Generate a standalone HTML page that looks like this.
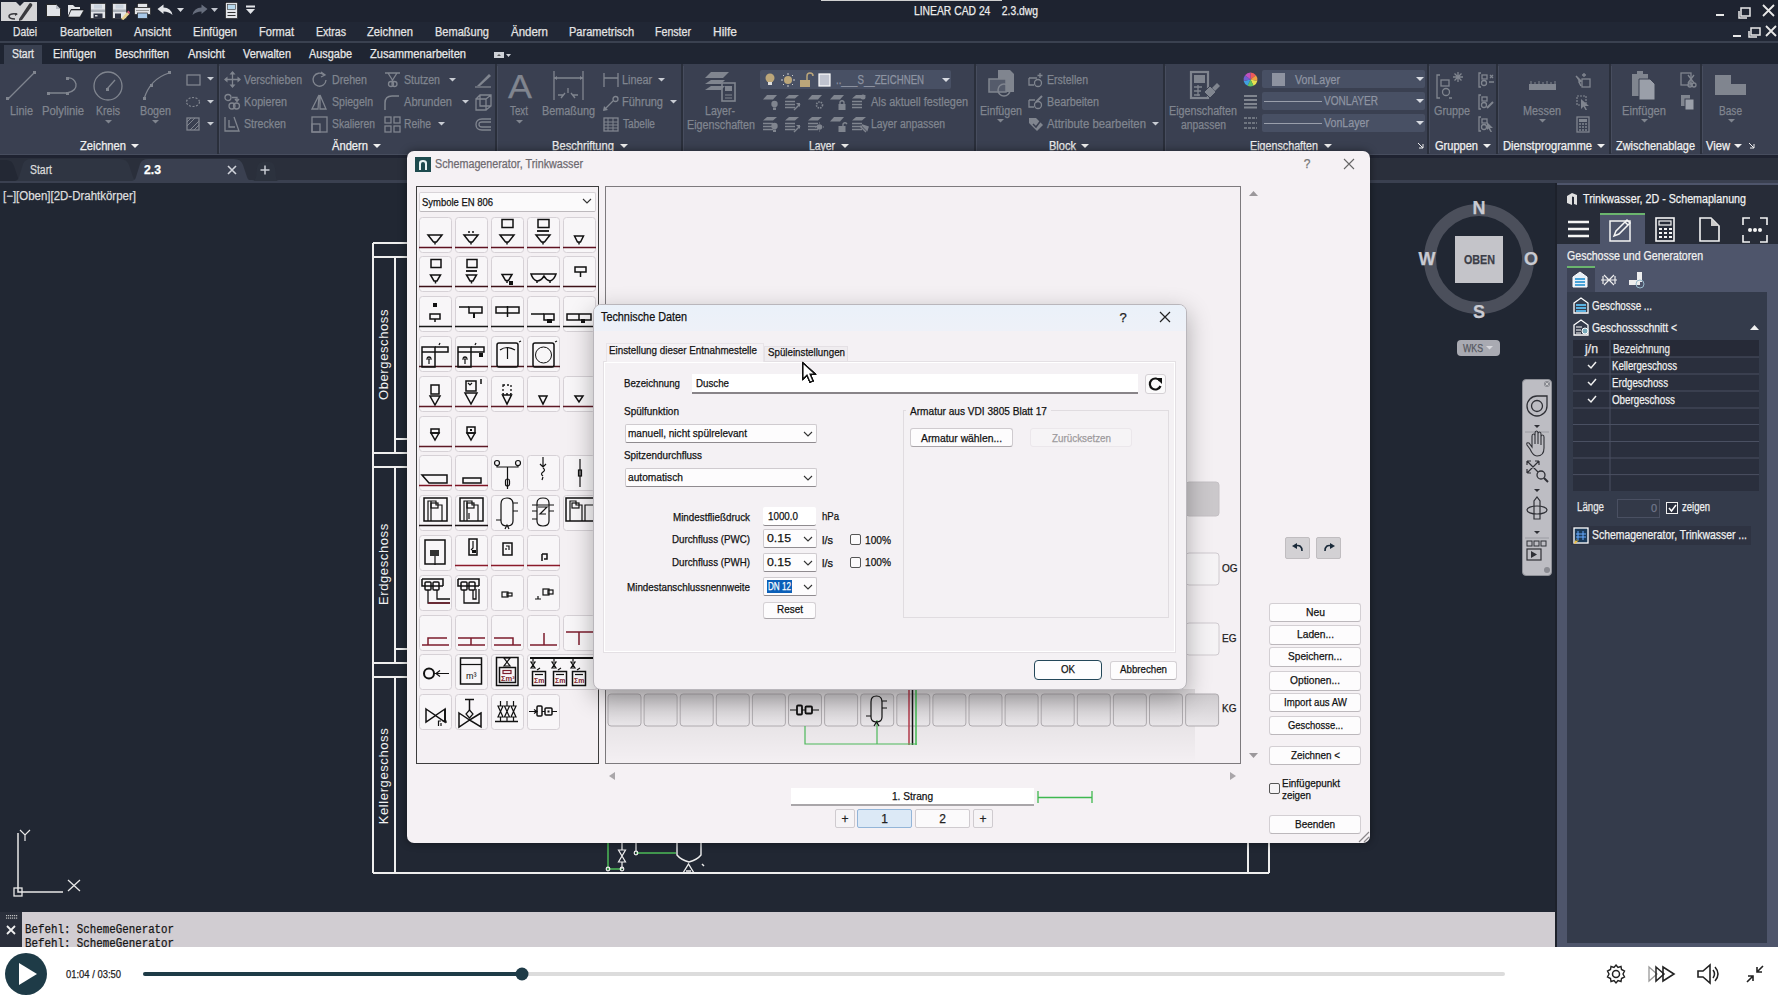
<!DOCTYPE html>
<html><head><meta charset="utf-8">
<style>
*{box-sizing:border-box;margin:0;padding:0}
html,body{width:1778px;height:1000px;overflow:hidden;background:#212733;font-family:"Liberation Sans",sans-serif;position:relative}
.a{position:absolute}
svg.a{overflow:visible}
.t{position:absolute;white-space:nowrap;line-height:1;-webkit-text-stroke:0.25px currentColor}
</style></head><body>
<div class="a" style="left:0px;top:0px;width:1778px;height:22px;background:#1e2330;"></div>
<div class="a" style="left:0px;top:22px;width:1778px;height:19px;background:#212735;"></div>
<div class="a" style="left:0px;top:41px;width:1778px;height:2px;background:#3a4150;"></div>
<div class="a" style="left:0px;top:43px;width:1778px;height:21px;background:#1f2532;"></div>
<div class="a" style="left:0px;top:64px;width:1778px;height:92px;background:#3a4051;"></div>
<div class="a" style="left:0px;top:156px;width:1778px;height:27px;background:#2a2f3b;"></div>
<div class="a" style="left:0px;top:183px;width:1555px;height:729px;background:#212733;"></div>
<div class="a" style="left:0px;top:912px;width:1555px;height:36px;background:#d1cdd2;"></div>
<div class="a" style="left:0px;top:948px;width:1778px;height:52px;background:#ffffff;"></div>
<div class="a" style="left:1555px;top:183px;width:223px;height:765px;background:#4b5169;"></div>
<svg class="a" style="left:1px;top:1px;" width="37" height="21" viewBox="0 0 37 21"><path d="M0 1 H15 L19 5 L23 1 H36 V20 H0 Z" fill="#d4d4d6"/><path d="M18 18 L28 3 Q29 1.5 30.5 2.5 Q32 3.5 31 5 L21 19 L18 20 Z" fill="#3a3a3e"/><path d="M16 13 Q9 12 8 15 Q8 18 14 18" stroke="#3a3a3e" stroke-width="1.6" fill="none"/><path d="M14 12 L17 13 L14 15" fill="#3a3a3e"/></svg>
<svg class="a" style="left:46px;top:4px;" width="16" height="14" viewBox="0 0 16 14"><path d="M0.5 0.5 H10 L14.5 5 V12.5 H0.5 Z" fill="#e2e4e8" stroke="#111" stroke-width="0.8"/><path d="M10 0.5 V5 H14.5" fill="#b8bcc4"/></svg>
<svg class="a" style="left:67px;top:4px;" width="18" height="14" viewBox="0 0 18 14"><path d="M1 1 H6 L8 3 H13 V5 H4 L1 12 Z" fill="#e2e4e8"/><path d="M4 6 H17 L13 13 H1 Z" fill="#e2e4e8" stroke="#111" stroke-width="0.6"/></svg>
<svg class="a" style="left:90px;top:3px;" width="17" height="16" viewBox="0 0 17 16"><path d="M0.5 0.5 H15.5 V15.5 H0.5 Z" fill="#e2e4e8" stroke="#111" stroke-width="0.6"/><rect x="4" y="1.5" width="8" height="4" fill="#c9d2dc"/><rect x="1" y="6.5" width="14" height="2.5" fill="#aab0b8"/><rect x="3.5" y="10.5" width="9" height="5" fill="#2c3140"/><rect x="5" y="12" width="2.5" height="1.5" fill="#ddd"/></svg>
<svg class="a" style="left:112px;top:3px;" width="18" height="17" viewBox="0 0 18 17"><path d="M0.5 0.5 H14.5 V15.5 H0.5 Z" fill="#e2e4e8" stroke="#111" stroke-width="0.6"/><rect x="3.5" y="1.5" width="8" height="4" fill="#c9d2dc"/><rect x="1" y="6.5" width="13" height="2.5" fill="#aab0b8"/><rect x="3" y="10.5" width="6" height="5" fill="#2c3140"/><path d="M9 16 L15 9 L17.5 11 L11.5 17 Z" fill="#e8d090"/><path d="M15 9 L16.5 7.5 L18 9.5 L17.5 11 Z" fill="#d05070"/></svg>
<svg class="a" style="left:134px;top:3px;" width="17" height="16" viewBox="0 0 17 16"><rect x="3.5" y="0.5" width="10" height="4" fill="#e2e4e8" stroke="#111" stroke-width="0.6"/><rect x="0.5" y="4.5" width="16" height="7" fill="#e2e4e8" stroke="#111" stroke-width="0.6"/><rect x="3.5" y="10" width="10" height="5.5" fill="#a8c8e8" stroke="#111" stroke-width="0.6"/><rect x="2" y="7" width="13" height="1" fill="#999"/></svg>
<svg class="a" style="left:157px;top:4px;" width="18" height="13" viewBox="0 0 18 13"><path d="M0.5 5 L6.5 0.5 V3.5 Q14 3.5 15.5 11 Q12 7.5 6.5 7.5 V10 Z" fill="#e2e4e8"/></svg>
<svg class="a" style="left:177px;top:8px;" width="8" height="5" viewBox="0 0 8 5"><path d="M0 0 H7 L3.5 4 Z" fill="#d8dbe0"/></svg>
<svg class="a" style="left:190px;top:4px;" width="18" height="13" viewBox="0 0 18 13"><path d="M17.5 5 L11.5 0.5 V3.5 Q4 3.5 2.5 11 Q6 7.5 11.5 7.5 V10 Z" fill="#666d7c"/></svg>
<svg class="a" style="left:211px;top:8px;" width="8" height="5" viewBox="0 0 8 5"><path d="M0 0 H7 L3.5 4 Z" fill="#c0c4cc"/></svg>
<svg class="a" style="left:225px;top:2px;" width="14" height="17" viewBox="0 0 14 17"><rect x="0.5" y="0.5" width="12" height="16" fill="#e2e4e8" stroke="#111" stroke-width="0.6"/><rect x="2.5" y="2.5" width="8" height="5" fill="#b8d8ec" stroke="#333" stroke-width="0.6"/><path d="M2.5 10.5 H10.5 M2.5 13.5 H10.5" stroke="#333" stroke-width="1"/></svg>
<svg class="a" style="left:245px;top:5px;" width="11" height="10" viewBox="0 0 11 10"><rect x="1" y="0.5" width="9" height="2" fill="#e2e4e8"/><path d="M1 4 H10 L5.5 9 Z" fill="#e2e4e8"/></svg>
<div class="t" style="left:914.0px;top:5.0px;font-size:12px;color:#ececec;transform:scaleX(0.861);transform-origin:0 0;">LINEAR CAD 24&nbsp;&nbsp;&nbsp; 2.3.dwg</div>
<div class="a" style="left:821px;top:0px;width:181px;height:1px;background:#d0d0d0;"></div>
<svg class="a" style="left:1714px;top:4px;" width="64" height="16" viewBox="0 0 64 16"><rect x="2" y="10" width="8" height="2" fill="#e8e8e8"/><rect x="27" y="4" width="9" height="8" fill="none" stroke="#e8e8e8" stroke-width="1.5"/><path d="M25 7 V14 H33" fill="none" stroke="#e8e8e8" stroke-width="1.5"/><path d="M49 1 L60 12 M60 1 L49 12" stroke="#e8e8e8" stroke-width="1.8"/></svg>
<svg class="a" style="left:1730px;top:25px;" width="48" height="16" viewBox="0 0 48 16"><rect x="3" y="10" width="8" height="2" fill="#e8e8e8"/><rect x="21" y="3" width="9" height="7" fill="none" stroke="#e8e8e8" stroke-width="1.5"/><path d="M19 6 V12 H27" fill="none" stroke="#e8e8e8" stroke-width="1.5"/><path d="M36 1 L46 11 M46 1 L36 11" stroke="#e8e8e8" stroke-width="1.8"/></svg>
<div class="t" style="left:13.0px;top:26.0px;font-size:12px;color:#e4e4e4;transform:scaleX(0.857);transform-origin:0 0;">Datei</div>
<div class="t" style="left:60.0px;top:26.0px;font-size:12px;color:#e4e4e4;transform:scaleX(0.896);transform-origin:0 0;">Bearbeiten</div>
<div class="t" style="left:134.0px;top:26.0px;font-size:12px;color:#e4e4e4;transform:scaleX(0.940);transform-origin:0 0;">Ansicht</div>
<div class="t" style="left:193.0px;top:26.0px;font-size:12px;color:#e4e4e4;transform:scaleX(0.929);transform-origin:0 0;">Einfügen</div>
<div class="t" style="left:259.0px;top:26.0px;font-size:12px;color:#e4e4e4;transform:scaleX(0.921);transform-origin:0 0;">Format</div>
<div class="t" style="left:316.0px;top:26.0px;font-size:12px;color:#e4e4e4;transform:scaleX(0.882);transform-origin:0 0;">Extras</div>
<div class="t" style="left:367.0px;top:26.0px;font-size:12px;color:#e4e4e4;transform:scaleX(0.932);transform-origin:0 0;">Zeichnen</div>
<div class="t" style="left:435.0px;top:26.0px;font-size:12px;color:#e4e4e4;transform:scaleX(0.920);transform-origin:0 0;">Bemaßung</div>
<div class="t" style="left:511.0px;top:26.0px;font-size:12px;color:#e4e4e4;transform:scaleX(0.956);transform-origin:0 0;">Ändern</div>
<div class="t" style="left:569.0px;top:26.0px;font-size:12px;color:#e4e4e4;transform:scaleX(0.920);transform-origin:0 0;">Parametrisch</div>
<div class="t" style="left:655.0px;top:26.0px;font-size:12px;color:#e4e4e4;transform:scaleX(0.885);transform-origin:0 0;">Fenster</div>
<div class="t" style="left:713.0px;top:26.0px;font-size:12px;color:#e4e4e4;transform:scaleX(1.000);transform-origin:0 0;">Hilfe</div>
<div class="a" style="left:4px;top:45px;width:38px;height:19px;background:#394050;"></div>
<div class="t" style="left:12.0px;top:48.0px;font-size:12px;color:#e8e8e8;transform:scaleX(0.868);transform-origin:0 0;">Start</div>
<div class="t" style="left:53.0px;top:48.0px;font-size:12px;color:#e8e8e8;transform:scaleX(0.908);transform-origin:0 0;">Einfügen</div>
<div class="t" style="left:115.0px;top:48.0px;font-size:12px;color:#e8e8e8;transform:scaleX(0.900);transform-origin:0 0;">Beschriften</div>
<div class="t" style="left:188.0px;top:48.0px;font-size:12px;color:#e8e8e8;transform:scaleX(0.940);transform-origin:0 0;">Ansicht</div>
<div class="t" style="left:243.0px;top:48.0px;font-size:12px;color:#e8e8e8;transform:scaleX(0.911);transform-origin:0 0;">Verwalten</div>
<div class="t" style="left:309.0px;top:48.0px;font-size:12px;color:#e8e8e8;transform:scaleX(0.908);transform-origin:0 0;">Ausgabe</div>
<div class="t" style="left:370.0px;top:48.0px;font-size:12px;color:#e8e8e8;transform:scaleX(0.929);transform-origin:0 0;">Zusammenarbeiten</div>
<svg class="a" style="left:493px;top:51px;" width="18" height="8" viewBox="0 0 18 8"><rect x="1" y="1" width="10" height="6" fill="#cfd2d8"/><path d="M4 5 L6 3 L8 5" fill="#555"/><path d="M13 3 H18 L15.5 6 Z" fill="#cfd2d8"/></svg>
<div class="a" style="left:217px;top:64px;width:2px;height:91px;background:#2a2f3b;"></div>
<div class="a" style="left:219px;top:66px;width:1px;height:87px;background:#474d5e;"></div>
<div class="a" style="left:495px;top:64px;width:2px;height:91px;background:#2a2f3b;"></div>
<div class="a" style="left:497px;top:66px;width:1px;height:87px;background:#474d5e;"></div>
<div class="a" style="left:681px;top:64px;width:2px;height:91px;background:#2a2f3b;"></div>
<div class="a" style="left:683px;top:66px;width:1px;height:87px;background:#474d5e;"></div>
<div class="a" style="left:974px;top:64px;width:2px;height:91px;background:#2a2f3b;"></div>
<div class="a" style="left:976px;top:66px;width:1px;height:87px;background:#474d5e;"></div>
<div class="a" style="left:1163px;top:64px;width:2px;height:91px;background:#2a2f3b;"></div>
<div class="a" style="left:1165px;top:66px;width:1px;height:87px;background:#474d5e;"></div>
<div class="a" style="left:1427px;top:64px;width:2px;height:91px;background:#2a2f3b;"></div>
<div class="a" style="left:1429px;top:66px;width:1px;height:87px;background:#474d5e;"></div>
<div class="a" style="left:1496px;top:64px;width:2px;height:91px;background:#2a2f3b;"></div>
<div class="a" style="left:1498px;top:66px;width:1px;height:87px;background:#474d5e;"></div>
<div class="a" style="left:1609px;top:64px;width:2px;height:91px;background:#2a2f3b;"></div>
<div class="a" style="left:1611px;top:66px;width:1px;height:87px;background:#474d5e;"></div>
<div class="a" style="left:1700px;top:64px;width:2px;height:91px;background:#2a2f3b;"></div>
<div class="a" style="left:1702px;top:66px;width:1px;height:87px;background:#474d5e;"></div>
<div class="a" style="left:0px;top:154px;width:1778px;height:1px;background:#474d5e;"></div>
<div class="a" style="left:0px;top:155px;width:1778px;height:3px;background:#1f2331;"></div>
<div class="t" style="left:80.0px;top:140.0px;font-size:12px;color:#f0f0f0;transform:scaleX(0.932);transform-origin:0 0;">Zeichnen</div>
<svg class="a" style="left:131px;top:144.0px;" width="8" height="4" viewBox="0 0 8 4"><path d="M0 0 H8 L4 4 Z" fill="#f0f0f0"/></svg>
<div class="t" style="left:332.0px;top:140.0px;font-size:12px;color:#f0f0f0;transform:scaleX(0.930);transform-origin:0 0;">Ändern</div>
<svg class="a" style="left:373px;top:144.0px;" width="8" height="4" viewBox="0 0 8 4"><path d="M0 0 H8 L4 4 Z" fill="#f0f0f0"/></svg>
<div class="t" style="left:552.0px;top:140.0px;font-size:12px;color:#f0f0f0;transform:scaleX(0.929);transform-origin:0 0;">Beschriftung</div>
<svg class="a" style="left:620px;top:144.0px;" width="8" height="4" viewBox="0 0 8 4"><path d="M0 0 H8 L4 4 Z" fill="#f0f0f0"/></svg>
<div class="t" style="left:809.0px;top:140.0px;font-size:12px;color:#f0f0f0;transform:scaleX(0.866);transform-origin:0 0;">Layer</div>
<svg class="a" style="left:841px;top:144.0px;" width="8" height="4" viewBox="0 0 8 4"><path d="M0 0 H8 L4 4 Z" fill="#f0f0f0"/></svg>
<div class="t" style="left:1049.0px;top:140.0px;font-size:12px;color:#f0f0f0;transform:scaleX(0.920);transform-origin:0 0;">Block</div>
<svg class="a" style="left:1081px;top:144.0px;" width="8" height="4" viewBox="0 0 8 4"><path d="M0 0 H8 L4 4 Z" fill="#f0f0f0"/></svg>
<div class="t" style="left:1250.0px;top:140.0px;font-size:12px;color:#f0f0f0;transform:scaleX(0.894);transform-origin:0 0;">Eigenschaften</div>
<svg class="a" style="left:1324px;top:144.0px;" width="8" height="4" viewBox="0 0 8 4"><path d="M0 0 H8 L4 4 Z" fill="#f0f0f0"/></svg>
<div class="t" style="left:1435.0px;top:140.0px;font-size:12px;color:#f0f0f0;transform:scaleX(0.921);transform-origin:0 0;">Gruppen</div>
<svg class="a" style="left:1483px;top:144.0px;" width="8" height="4" viewBox="0 0 8 4"><path d="M0 0 H8 L4 4 Z" fill="#f0f0f0"/></svg>
<div class="t" style="left:1503.0px;top:140.0px;font-size:12px;color:#f0f0f0;transform:scaleX(0.933);transform-origin:0 0;">Dienstprogramme</div>
<svg class="a" style="left:1597px;top:144.0px;" width="8" height="4" viewBox="0 0 8 4"><path d="M0 0 H8 L4 4 Z" fill="#f0f0f0"/></svg>
<div class="t" style="left:1616.0px;top:140.0px;font-size:12px;color:#f0f0f0;transform:scaleX(0.911);transform-origin:0 0;">Zwischenablage</div>
<div class="t" style="left:1706.0px;top:140.0px;font-size:12px;color:#f0f0f0;transform:scaleX(0.930);transform-origin:0 0;">View</div>
<svg class="a" style="left:1734px;top:144.0px;" width="8" height="4" viewBox="0 0 8 4"><path d="M0 0 H8 L4 4 Z" fill="#f0f0f0"/></svg>
<svg class="a" style="left:1417px;top:142px;" width="8" height="8" viewBox="0 0 8 8"><path d="M1 1 L6 6 M6 2 V6 H2" stroke="#f0f0f0" stroke-width="1" fill="none"/></svg>
<svg class="a" style="left:1748px;top:142px;" width="8" height="8" viewBox="0 0 8 8"><path d="M1 1 L6 6 M6 2 V6 H2" stroke="#f0f0f0" stroke-width="1" fill="none"/></svg>
<svg class="a" style="left:0px;top:64px;" width="220" height="60" viewBox="0 0 220 60">
      <path d="M8 35 L34 9" stroke="#80858f" stroke-width="1.3" fill="none"/><rect x="6" y="33" width="3" height="3" fill="#80858f"/><rect x="33" y="7" width="3" height="3" fill="#80858f"/>
      <path d="M49 29 H67 Q77 27 76 20 Q74 13 67 14" stroke="#80858f" stroke-width="1.3" fill="none"/><rect x="47" y="28" width="3" height="3" fill="#80858f"/><rect x="66" y="28" width="3" height="3" fill="#80858f"/><rect x="66" y="13" width="3" height="3" fill="#80858f"/>
      <circle cx="108" cy="22" r="14" stroke="#80858f" stroke-width="1.3" fill="none"/><path d="M107 25 L115 16" stroke="#80858f" stroke-width="1.3" fill="none"/><rect x="106" y="24" width="3" height="3" fill="#80858f"/>
      <path d="M144 35 Q150 15 169 9" stroke="#80858f" stroke-width="1.3" fill="none"/><rect x="143" y="33" width="3" height="3" fill="#80858f"/><rect x="150" y="20" width="3" height="3" fill="#80858f"/><rect x="168" y="7" width="3" height="3" fill="#80858f"/>
      <rect x="187" y="11" width="13" height="10" stroke="#80858f" stroke-width="1.3" fill="none"/>
      <ellipse cx="193" cy="38" rx="6.5" ry="4.5" stroke="#80858f" stroke-width="1.2" fill="none" stroke-dasharray="2 1.5"/>
    </svg>
<svg class="a" style="left:186px;top:117px;" width="15" height="15" viewBox="0 0 15 15"><rect x="1" y="1" width="12" height="12" stroke="#80858f" stroke-width="1.3" fill="none"/><path d="M1 9 L9 1 M4 13 L13 4 M1 5 L5 1 M8 13 L13 8" stroke="#80858f" stroke-width="1"/></svg>
<svg class="a" style="left:206.5px;top:77.25px;" width="7.0" height="3.5" viewBox="0 0 7.0 3.5"><path d="M0 0 H7.0 L3.5 3.5 Z" fill="#c8ccd3"/></svg>
<svg class="a" style="left:206.5px;top:100.25px;" width="7.0" height="3.5" viewBox="0 0 7.0 3.5"><path d="M0 0 H7.0 L3.5 3.5 Z" fill="#c8ccd3"/></svg>
<svg class="a" style="left:206.5px;top:122.25px;" width="7.0" height="3.5" viewBox="0 0 7.0 3.5"><path d="M0 0 H7.0 L3.5 3.5 Z" fill="#c8ccd3"/></svg>
<div class="t" style="left:10.0px;top:105.0px;font-size:12px;color:#80858f;transform:scaleX(0.907);transform-origin:0 0;">Linie</div>
<div class="t" style="left:42.0px;top:105.0px;font-size:12px;color:#80858f;transform:scaleX(0.940);transform-origin:0 0;">Polylinie</div>
<div class="t" style="left:96.0px;top:105.0px;font-size:12px;color:#80858f;transform:scaleX(0.878);transform-origin:0 0;">Kreis</div>
<div class="t" style="left:140.0px;top:105.0px;font-size:12px;color:#80858f;transform:scaleX(0.893);transform-origin:0 0;">Bogen</div>
<svg class="a" style="left:104.5px;top:120.25px;" width="7.0" height="3.5" viewBox="0 0 7.0 3.5"><path d="M0 0 H7.0 L3.5 3.5 Z" fill="#80858f"/></svg>
<svg class="a" style="left:151.5px;top:120.25px;" width="7.0" height="3.5" viewBox="0 0 7.0 3.5"><path d="M0 0 H7.0 L3.5 3.5 Z" fill="#80858f"/></svg>
<svg class="a" style="left:224px;top:71px;" width="17" height="17" viewBox="0 0 17 17"><path d="M8.5 1 V16 M1 8.5 H16" stroke="#80858f" stroke-width="1.3" fill="none"/><path d="M8.5 0 L5.5 3.5 H11.5 Z M8.5 17 L5.5 13.5 H11.5 Z M0 8.5 L3.5 5.5 V11.5 Z M17 8.5 L13.5 5.5 V11.5 Z" fill="#80858f"/></svg>
<svg class="a" style="left:224px;top:94px;" width="17" height="16" viewBox="0 0 17 16"><circle cx="4" cy="3.5" r="3" stroke="#80858f" stroke-width="1.3" fill="none"/><path d="M8 3.5 H13 V7 M11 5 L13 7.5 L15 5" stroke="#80858f" stroke-width="1.3" fill="none"/><circle cx="8" cy="12" r="3" stroke="#80858f" stroke-width="1.3" fill="none"/><circle cx="12.5" cy="12" r="3" stroke="#80858f" stroke-width="1.3" fill="none"/></svg>
<svg class="a" style="left:224px;top:116px;" width="17" height="17" viewBox="0 0 17 17"><path d="M1 1 V15 H15 L10 1 M5 4 V11 H11" stroke="#80858f" stroke-width="1.3" fill="none"/></svg>
<svg class="a" style="left:311px;top:71px;" width="17" height="17" viewBox="0 0 17 17"><path d="M13 4 A6.5 6.5 0 1 0 15 9" stroke="#80858f" stroke-width="1.3" fill="none"/><path d="M10 1 L14 4 L10 6" stroke="#80858f" stroke-width="1.3" fill="none"/></svg>
<svg class="a" style="left:311px;top:94px;" width="17" height="16" viewBox="0 0 17 16"><path d="M8 1 L1 15 H7 Z M9 1 L15 15 H9 Z" stroke="#80858f" stroke-width="1.3" fill="none"/></svg>
<svg class="a" style="left:311px;top:116px;" width="17" height="17" viewBox="0 0 17 17"><rect x="1" y="1" width="15" height="15" stroke="#80858f" stroke-width="1.3" fill="none"/><rect x="1" y="8" width="8" height="8" stroke="#80858f" stroke-width="1.3" fill="none"/></svg>
<svg class="a" style="left:384px;top:71px;" width="17" height="17" viewBox="0 0 17 17"><path d="M1 2 H16 M4 2 L9 10 M13 2 L8 10" stroke="#80858f" stroke-width="1.3" fill="none"/><circle cx="7" cy="13" r="2.5" stroke="#80858f" stroke-width="1.3" fill="none"/><circle cx="10.5" cy="13" r="2.5" stroke="#80858f" stroke-width="1.3" fill="none"/></svg>
<svg class="a" style="left:384px;top:94px;" width="17" height="17" viewBox="0 0 17 17"><path d="M1 16 V9 Q1 2 8 2 H15" stroke="#80858f" stroke-width="1.5" fill="none"/></svg>
<svg class="a" style="left:384px;top:116px;" width="17" height="17" viewBox="0 0 17 17"><rect x="1" y="1" width="6" height="6" stroke="#80858f" stroke-width="1.3" fill="none"/><rect x="10" y="1" width="6" height="6" stroke="#80858f" stroke-width="1.3" fill="none"/><rect x="1" y="10" width="6" height="6" stroke="#80858f" stroke-width="1.3" fill="none"/><rect x="10" y="10" width="6" height="6" stroke="#80858f" stroke-width="1.3" fill="none"/></svg>
<svg class="a" style="left:475px;top:71px;" width="17" height="17" viewBox="0 0 17 17"><path d="M2 15 L14 3 L16 5 L5 15 Z" fill="#80858f"/><path d="M0 16 H16" stroke="#80858f" stroke-width="1.3" fill="none"/></svg>
<svg class="a" style="left:475px;top:94px;" width="17" height="17" viewBox="0 0 17 17"><path d="M1 5 H11 V16 H1 Z M1 5 L5 1 H16 V12 L11 16 M11 5 L16 1 M5 1 V12 H16" stroke="#80858f" stroke-width="1.3" fill="none"/></svg>
<svg class="a" style="left:475px;top:116px;" width="17" height="17" viewBox="0 0 17 17"><path d="M16 3 H7 Q1 3 1 8.5 Q1 14 7 14 H16 M16 6 H7 Q4 6 4 8.5 Q4 11 7 11 H16" stroke="#80858f" stroke-width="1.3" fill="none"/></svg>
<div class="t" style="left:244.0px;top:74.0px;font-size:12px;color:#80858f;transform:scaleX(0.878);transform-origin:0 0;">Verschieben</div>
<div class="t" style="left:244.0px;top:96.0px;font-size:12px;color:#80858f;transform:scaleX(0.895);transform-origin:0 0;">Kopieren</div>
<div class="t" style="left:244.0px;top:118.0px;font-size:12px;color:#80858f;transform:scaleX(0.887);transform-origin:0 0;">Strecken</div>
<div class="t" style="left:332.0px;top:74.0px;font-size:12px;color:#80858f;transform:scaleX(0.889);transform-origin:0 0;">Drehen</div>
<div class="t" style="left:332.0px;top:96.0px;font-size:12px;color:#80858f;transform:scaleX(0.878);transform-origin:0 0;">Spiegeln</div>
<div class="t" style="left:332.0px;top:118.0px;font-size:12px;color:#80858f;transform:scaleX(0.859);transform-origin:0 0;">Skalieren</div>
<div class="t" style="left:404.0px;top:74.0px;font-size:12px;color:#80858f;transform:scaleX(0.885);transform-origin:0 0;">Stutzen</div>
<svg class="a" style="left:448.5px;top:78.25px;" width="7.0" height="3.5" viewBox="0 0 7.0 3.5"><path d="M0 0 H7.0 L3.5 3.5 Z" fill="#c8ccd3"/></svg>
<div class="t" style="left:404.0px;top:96.0px;font-size:12px;color:#80858f;transform:scaleX(0.922);transform-origin:0 0;">Abrunden</div>
<svg class="a" style="left:461.5px;top:100.25px;" width="7.0" height="3.5" viewBox="0 0 7.0 3.5"><path d="M0 0 H7.0 L3.5 3.5 Z" fill="#c8ccd3"/></svg>
<div class="t" style="left:404.0px;top:118.0px;font-size:12px;color:#80858f;transform:scaleX(0.861);transform-origin:0 0;">Reihe</div>
<svg class="a" style="left:437.5px;top:122.25px;" width="7.0" height="3.5" viewBox="0 0 7.0 3.5"><path d="M0 0 H7.0 L3.5 3.5 Z" fill="#c8ccd3"/></svg>
<div class="t" style="left:508.0px;top:69.0px;font-size:34px;color:#80858f;transform:scaleX(1.058);transform-origin:0 0;">A</div>
<div class="t" style="left:510.0px;top:105.0px;font-size:12px;color:#80858f;transform:scaleX(0.818);transform-origin:0 0;">Text</div>
<svg class="a" style="left:515.5px;top:120.25px;" width="7.0" height="3.5" viewBox="0 0 7.0 3.5"><path d="M0 0 H7.0 L3.5 3.5 Z" fill="#80858f"/></svg>
<svg class="a" style="left:553px;top:71px;" width="31" height="31" viewBox="0 0 31 31"><path d="M1 0 V29 M30 0 V29 M1 7 H30" stroke="#80858f" stroke-width="1.3" fill="none"/><path d="M1 7 L4 5 V9 Z M30 7 L27 5 V9 Z" fill="#80858f"/><path d="M8 27 L12 22 M15 22 V17 M22 27 L18 22 M5 24 L10 24 M25 24 L20 24" stroke="#80858f" stroke-width="1.3" fill="none"/></svg>
<div class="t" style="left:542.0px;top:105.0px;font-size:12px;color:#80858f;transform:scaleX(0.903);transform-origin:0 0;">Bemaßung</div>
<svg class="a" style="left:603px;top:72px;" width="16" height="16" viewBox="0 0 16 16"><path d="M1 1 V15 M15 1 V15 M1 6 H15" stroke="#80858f" stroke-width="1.3" fill="none"/></svg>
<div class="t" style="left:622.0px;top:74.0px;font-size:12px;color:#80858f;transform:scaleX(0.899);transform-origin:0 0;">Linear</div>
<svg class="a" style="left:657.5px;top:78.25px;" width="7.0" height="3.5" viewBox="0 0 7.0 3.5"><path d="M0 0 H7.0 L3.5 3.5 Z" fill="#c8ccd3"/></svg>
<svg class="a" style="left:603px;top:95px;" width="16" height="16" viewBox="0 0 16 16"><path d="M1 15 L10 6" stroke="#80858f" stroke-width="1.3" fill="none"/><circle cx="12.5" cy="4" r="2.5" stroke="#80858f" stroke-width="1.3" fill="none"/><path d="M0 16 L1 11 L5 15 Z" fill="#80858f"/></svg>
<div class="t" style="left:622.0px;top:96.0px;font-size:12px;color:#80858f;transform:scaleX(0.917);transform-origin:0 0;">Führung</div>
<svg class="a" style="left:669.5px;top:100.25px;" width="7.0" height="3.5" viewBox="0 0 7.0 3.5"><path d="M0 0 H7.0 L3.5 3.5 Z" fill="#c8ccd3"/></svg>
<svg class="a" style="left:603px;top:117px;" width="16" height="15" viewBox="0 0 16 15"><rect x="1" y="1" width="14" height="13" stroke="#80858f" stroke-width="1.3" fill="none"/><path d="M1 5 H15 M1 8 H15 M1 11 H15 M5 1 V14 M10 1 V14" stroke="#80858f" stroke-width="1"/></svg>
<div class="t" style="left:623.0px;top:118.0px;font-size:12px;color:#80858f;transform:scaleX(0.841);transform-origin:0 0;">Tabelle</div>
<svg class="a" style="left:705px;top:70px;" width="32" height="32" viewBox="0 0 32 32"><path d="M6 2 H24 L18 8 H0 Z" fill="#80858f"/><path d="M6 10 H20 L16 14 H0 Z M6 16 H20 L16 20 H0 Z" fill="#80858f"/><rect x="17" y="13" width="13" height="18" fill="none" stroke="#80858f" stroke-width="1.6"/><rect x="20" y="16" width="7" height="5" fill="#80858f"/><path d="M20 25 H27 M20 28 H27" stroke="#80858f"/></svg>
<div class="t" style="left:705.0px;top:105.0px;font-size:12px;color:#80858f;transform:scaleX(0.882);transform-origin:0 0;">Layer-</div>
<div class="t" style="left:687.0px;top:119.0px;font-size:12px;color:#80858f;transform:scaleX(0.894);transform-origin:0 0;">Eigenschaften</div>
<div class="a" style="left:760px;top:70px;width:191px;height:19px;background:#485064;border-radius:2px"></div>
<svg class="a" style="left:764px;top:72px;" width="70" height="16" viewBox="0 0 70 16"><circle cx="6" cy="6" r="4.5" fill="#bba67a"/><rect x="4" y="10" width="4" height="3" fill="#ddd"/><circle cx="24" cy="8" r="4" fill="#bba67a"/><path d="M24 1 V3 M24 13 V15 M17 8 H19 M29 8 H31 M19 3 L20 4 M29 3 L28 4 M19 13 L20 12 M29 13 L28 12" stroke="#ccc" stroke-width="1"/><rect x="36" y="8" width="10" height="7" fill="#bba67a"/><path d="M43 8 V4 Q43 1 46 1 Q49 1 49 4" stroke="#bba67a" stroke-width="1.5" fill="none"/><rect x="55" y="2" width="11" height="12" fill="#c0c4d0" stroke="#fff" stroke-width="1.2"/></svg>
<div class="t" style="left:836.0px;top:74.0px;font-size:12px;color:#8e94a2;transform:scaleX(0.805);transform-origin:0 0;">..___S__ZEICHNEN</div>
<svg class="a" style="left:942px;top:78.0px;" width="8" height="4" viewBox="0 0 8 4"><path d="M0 0 H8 L4 4 Z" fill="#d8dbe2"/></svg>
<svg class="a" style="left:763px;top:94px;" width="17" height="17" viewBox="0 0 17 17"><path d="M4 1 H14 L10 5.5 H0 Z" fill="#80858f"/><circle cx="11.5" cy="10" r="3.2" fill="#80858f"/><rect x="10" y="13.5" width="3" height="2.5" fill="#80858f"/></svg>
<svg class="a" style="left:763px;top:116px;" width="17" height="17" viewBox="0 0 17 17"><path d="M4 1 H14 L10 4.5 H0 Z M0 7 H10 M0 10 H10 M0 13 H10" fill="#80858f" stroke="#80858f" stroke-width="0"/><path d="M0 7.5 H10 M0 10.5 H10 M0 13.5 H10" stroke="#80858f" stroke-width="1.6"/><circle cx="11.5" cy="10" r="3.2" fill="#80858f"/><rect x="10" y="13.5" width="3" height="2.5" fill="#80858f"/></svg>
<svg class="a" style="left:785px;top:94px;" width="17" height="17" viewBox="0 0 17 17"><path d="M4 1 H14 L10 4.5 H0 Z M0 7 H10 M0 10 H10 M0 13 H10" fill="#80858f" stroke="#80858f" stroke-width="0"/><path d="M0 7.5 H10 M0 10.5 H10 M0 13.5 H10" stroke="#80858f" stroke-width="1.6"/><path d="M9 16 L15 10" stroke="#80858f" stroke-width="1.5"/><path d="M15 9 L15 13 L11 9 Z" fill="#80858f"/></svg>
<svg class="a" style="left:785px;top:116px;" width="17" height="17" viewBox="0 0 17 17"><path d="M4 1 H14 L10 4.5 H0 Z M0 7 H10 M0 10 H10 M0 13 H10" fill="#80858f" stroke="#80858f" stroke-width="0"/><path d="M0 7.5 H10 M0 10.5 H10 M0 13.5 H10" stroke="#80858f" stroke-width="1.6"/><path d="M9 16 L15 10" stroke="#80858f" stroke-width="1.5"/><path d="M15 9 L15 13 L11 9 Z" fill="#80858f"/></svg>
<svg class="a" style="left:808px;top:94px;" width="17" height="17" viewBox="0 0 17 17"><path d="M4 1 H14 L10 5.5 H0 Z" fill="#80858f"/><circle cx="11.5" cy="11" r="3" fill="none" stroke="#80858f" stroke-width="1.6" stroke-dasharray="1.5 1"/></svg>
<svg class="a" style="left:808px;top:116px;" width="17" height="17" viewBox="0 0 17 17"><path d="M4 1 H14 L10 4.5 H0 Z M0 7 H10 M0 10 H10 M0 13 H10" fill="#80858f" stroke="#80858f" stroke-width="0"/><path d="M0 7.5 H10 M0 10.5 H10 M0 13.5 H10" stroke="#80858f" stroke-width="1.6"/><circle cx="11.5" cy="11" r="2.8" fill="#80858f"/><path d="M11.5 6.5 V7.5 M11.5 14.5 V15.5 M7 11 H8 M15 11 H16" stroke="#80858f"/></svg>
<svg class="a" style="left:830px;top:94px;" width="17" height="17" viewBox="0 0 17 17"><path d="M4 1 H14 L10 5.5 H0 Z" fill="#80858f"/><rect x="8.5" y="10" width="7" height="6" fill="#80858f"/><path d="M10 10 V8 Q12 5.5 14 8 V10" stroke="#80858f" stroke-width="1.3" fill="none"/></svg>
<svg class="a" style="left:830px;top:116px;" width="17" height="17" viewBox="0 0 17 17"><path d="M4 1 H14 L10 5.5 H0 Z" fill="#80858f"/><rect x="8.5" y="10" width="7" height="6" fill="#80858f"/><path d="M13 10 V8 Q15 5.5 17 8" stroke="#80858f" stroke-width="1.3" fill="none"/></svg>
<svg class="a" style="left:852px;top:94px;" width="17" height="17" viewBox="0 0 17 17"><circle cx="11" cy="3" r="2.5" fill="#80858f"/><path d="M4 1 H14 L10 4.5 H0 Z M0 7 H10 M0 10 H10 M0 13 H10" fill="#80858f" stroke="#80858f" stroke-width="0"/><path d="M0 7.5 H10 M0 10.5 H10 M0 13.5 H10" stroke="#80858f" stroke-width="1.6"/></svg>
<svg class="a" style="left:852px;top:116px;" width="17" height="17" viewBox="0 0 17 17"><path d="M4 1 H14 L10 4.5 H0 Z M0 7 H10 M0 10 H10 M0 13 H10" fill="#80858f" stroke="#80858f" stroke-width="0"/><path d="M0 7.5 H10 M0 10.5 H10 M0 13.5 H10" stroke="#80858f" stroke-width="1.6"/><path d="M8 10 L14 16 M10 9 L15 14 L16 11 Z" stroke="#80858f" stroke-width="1.5" fill="#80858f"/></svg>
<div class="t" style="left:871.0px;top:96.0px;font-size:12px;color:#80858f;transform:scaleX(0.909);transform-origin:0 0;">Als aktuell festlegen</div>
<div class="t" style="left:871.0px;top:118.0px;font-size:12px;color:#80858f;transform:scaleX(0.867);transform-origin:0 0;">Layer anpassen</div>
<svg class="a" style="left:988px;top:70px;" width="30" height="30" viewBox="0 0 30 30"><path d="M10 0 H22 L26 4 V22 H10 Z" fill="#80858f"/><rect x="1" y="9" width="17" height="13" fill="#555b6b" stroke="#80858f" stroke-width="1.5"/><circle cx="16" cy="20" r="6" fill="none" stroke="#80858f" stroke-width="1.5"/></svg>
<div class="t" style="left:980.0px;top:105.0px;font-size:12px;color:#80858f;transform:scaleX(0.887);transform-origin:0 0;">Einfügen</div>
<svg class="a" style="left:996.5px;top:119.25px;" width="7.0" height="3.5" viewBox="0 0 7.0 3.5"><path d="M0 0 H7.0 L3.5 3.5 Z" fill="#80858f"/></svg>
<svg class="a" style="left:1028px;top:72px;" width="16" height="16" viewBox="0 0 16 16"><path d="M1 6 H9 M1 6 V13 H6" stroke="#80858f" stroke-width="1.3" fill="none"/><circle cx="10" cy="11" r="3.5" stroke="#80858f" stroke-width="1.3" fill="none"/><path d="M12 1 L12 6 M9.5 3.5 H14.5" stroke="#80858f" stroke-width="1.3" fill="none"/></svg>
<svg class="a" style="left:1028px;top:94px;" width="16" height="16" viewBox="0 0 16 16"><path d="M1 6 H7 M1 6 V13 H6" stroke="#80858f" stroke-width="1.3" fill="none"/><circle cx="10" cy="11" r="3.5" stroke="#80858f" stroke-width="1.3" fill="none"/><path d="M8 8 L14 2" stroke="#80858f" stroke-width="2"/></svg>
<svg class="a" style="left:1028px;top:116px;" width="16" height="16" viewBox="0 0 16 16"><path d="M1 2 L8 2 L15 9 L9 15 L1 7 Z" fill="#80858f"/><path d="M5 8 L8 11 L14 3" stroke="#3a4051" stroke-width="1.5" fill="none"/></svg>
<div class="t" style="left:1047.0px;top:74.0px;font-size:12px;color:#80858f;transform:scaleX(0.878);transform-origin:0 0;">Erstellen</div>
<div class="t" style="left:1047.0px;top:96.0px;font-size:12px;color:#80858f;transform:scaleX(0.896);transform-origin:0 0;">Bearbeiten</div>
<div class="t" style="left:1047.0px;top:118.0px;font-size:12px;color:#80858f;transform:scaleX(0.945);transform-origin:0 0;">Attribute bearbeiten</div>
<svg class="a" style="left:1151.5px;top:122.25px;" width="7.0" height="3.5" viewBox="0 0 7.0 3.5"><path d="M0 0 H7.0 L3.5 3.5 Z" fill="#c8ccd3"/></svg>
<svg class="a" style="left:1189px;top:71px;" width="32" height="30" viewBox="0 0 32 30"><rect x="2" y="1" width="17" height="26" fill="none" stroke="#80858f" stroke-width="2.2"/><rect x="5" y="4" width="11" height="8" fill="#80858f"/><path d="M5 16 H13 M5 20 H12 M5 24 H11 M9 14 V25" stroke="#80858f" stroke-width="1.3"/><path d="M15 21 L21 15 L27 21 L21 27 Z" fill="#80858f" stroke="#3a4051" stroke-width="1"/><path d="M23 17 L28 12 L31 15 L26 20 Z" fill="#80858f"/></svg>
<div class="t" style="left:1169.0px;top:105.0px;font-size:12px;color:#80858f;transform:scaleX(0.894);transform-origin:0 0;">Eigenschaften</div>
<div class="t" style="left:1180.5px;top:119.0px;font-size:12px;color:#80858f;transform:scaleX(0.865);transform-origin:0 0;">anpassen</div>
<svg class="a" style="left:1243px;top:72px;" width="15" height="15" viewBox="0 0 15 15"><path d="M7.5 7.5 L7.50 0.50 A7 7 0 0 1 12.97 3.14 Z" fill="#f05a5a"/><path d="M7.5 7.5 L12.97 3.14 A7 7 0 0 1 14.32 9.06 Z" fill="#f0a040"/><path d="M7.5 7.5 L14.32 9.06 A7 7 0 0 1 10.54 13.81 Z" fill="#e8e050"/><path d="M7.5 7.5 L10.54 13.81 A7 7 0 0 1 4.46 13.81 Z" fill="#60c060"/><path d="M7.5 7.5 L4.46 13.81 A7 7 0 0 1 0.68 9.06 Z" fill="#40a0e0"/><path d="M7.5 7.5 L0.68 9.06 A7 7 0 0 1 2.03 3.14 Z" fill="#7060d0"/><path d="M7.5 7.5 L2.03 3.14 A7 7 0 0 1 7.50 0.50 Z" fill="#c050c0"/></svg>
<svg class="a" style="left:1243px;top:94px;" width="15" height="15" viewBox="0 0 15 15"><path d="M1 2 H14 M1 6 H14 M1 10 H14 M1 13.5 H14" stroke="#80858f" stroke-width="2"/></svg>
<svg class="a" style="left:1243px;top:116px;" width="15" height="15" viewBox="0 0 15 15"><path d="M1 2 H14 M1 7 H14 M1 12 H14" stroke="#80858f" stroke-width="1.5" stroke-dasharray="3 1"/></svg>
<div class="a" style="left:1262px;top:70px;width:163px;height:18px;background:#485064;border-radius:2px"></div>
<svg class="a" style="left:1416px;top:77.0px;" width="8" height="4" viewBox="0 0 8 4"><path d="M0 0 H8 L4 4 Z" fill="#d8dbe2"/></svg>
<div class="a" style="left:1262px;top:92px;width:163px;height:18px;background:#485064;border-radius:2px"></div>
<svg class="a" style="left:1416px;top:99.0px;" width="8" height="4" viewBox="0 0 8 4"><path d="M0 0 H8 L4 4 Z" fill="#d8dbe2"/></svg>
<div class="a" style="left:1262px;top:114px;width:163px;height:18px;background:#485064;border-radius:2px"></div>
<svg class="a" style="left:1416px;top:121.0px;" width="8" height="4" viewBox="0 0 8 4"><path d="M0 0 H8 L4 4 Z" fill="#d8dbe2"/></svg>
<div class="a" style="left:1272px;top:73px;width:13px;height:13px;background:#8e93a0;"></div>
<div class="t" style="left:1295.0px;top:74.0px;font-size:12px;color:#8e94a2;transform:scaleX(0.887);transform-origin:0 0;">VonLayer</div>
<div class="a" style="left:1264px;top:101px;width:58px;height:1px;background:#9a9fab;"></div>
<div class="t" style="left:1324.0px;top:95.0px;font-size:12px;color:#8e94a2;transform:scaleX(0.838);transform-origin:0 0;">VONLAYER</div>
<div class="a" style="left:1264px;top:123px;width:58px;height:1px;background:#9a9fab;"></div>
<div class="t" style="left:1324.0px;top:117.0px;font-size:12px;color:#8e94a2;transform:scaleX(0.887);transform-origin:0 0;">VonLayer</div>
<svg class="a" style="left:1436px;top:71px;" width="30" height="30" viewBox="0 0 30 30"><path d="M4 4 H1 V27 H4 M13 27 H16" stroke="#80858f" stroke-width="1.3" fill="none"/><rect x="5" y="9" width="8" height="6" stroke="#80858f" stroke-width="1.3" fill="none"/><circle cx="10" cy="21" r="3.5" stroke="#80858f" stroke-width="1.3" fill="none"/><path d="M22 1 V11 M17 6 H27 M18.5 2.5 L25.5 9.5 M25.5 2.5 L18.5 9.5" stroke="#80858f" stroke-width="1.3"/></svg>
<div class="t" style="left:1434.0px;top:105.0px;font-size:12px;color:#80858f;transform:scaleX(0.899);transform-origin:0 0;">Gruppe</div>
<svg class="a" style="left:1478px;top:72px;" width="16" height="16" viewBox="0 0 16 16"><path d="M3 1 H1 V15 H3" stroke="#80858f" stroke-width="1.3" fill="none"/><rect x="4" y="3" width="5" height="4" stroke="#80858f" stroke-width="1.3" fill="none"/><circle cx="6" cy="11" r="2.5" stroke="#80858f" stroke-width="1.3" fill="none"/><path d="M12 3 L15 6 M15 3 L12 6 M11 10 H16" stroke="#80858f" stroke-width="1.3" fill="none"/></svg>
<svg class="a" style="left:1478px;top:94px;" width="16" height="16" viewBox="0 0 16 16"><path d="M3 1 H1 V15 H3" stroke="#80858f" stroke-width="1.3" fill="none"/><rect x="4" y="3" width="5" height="4" stroke="#80858f" stroke-width="1.3" fill="none"/><circle cx="6" cy="11" r="2.5" stroke="#80858f" stroke-width="1.3" fill="none"/><path d="M9 14 L15 8" stroke="#80858f" stroke-width="2"/></svg>
<svg class="a" style="left:1478px;top:116px;" width="16" height="16" viewBox="0 0 16 16"><path d="M3 1 H1 V15 H3" stroke="#80858f" stroke-width="1.3" fill="none"/><rect x="4" y="3" width="5" height="4" stroke="#80858f" stroke-width="1.3" fill="none"/><circle cx="6" cy="11" r="2.5" stroke="#80858f" stroke-width="1.3" fill="none"/><path d="M9 6 L15 12 L12 12 L14 16 L12.5 16 L10.5 12.5 L9 14 Z" fill="#80858f"/></svg>
<svg class="a" style="left:1528px;top:80px;" width="29" height="12" viewBox="0 0 29 12"><rect x="1" y="4" width="27" height="6" fill="#80858f"/><path d="M3 4 V1 M7 4 V2 M11 4 V1 M15 4 V2 M19 4 V1 M23 4 V2 M27 4 V1" stroke="#80858f"/></svg>
<div class="t" style="left:1523.0px;top:105.0px;font-size:12px;color:#80858f;transform:scaleX(0.904);transform-origin:0 0;">Messen</div>
<svg class="a" style="left:1538.5px;top:119.25px;" width="7.0" height="3.5" viewBox="0 0 7.0 3.5"><path d="M0 0 H7.0 L3.5 3.5 Z" fill="#80858f"/></svg>
<svg class="a" style="left:1575px;top:72px;" width="16" height="16" viewBox="0 0 16 16"><path d="M1 4 L6 9 L4 10 L6 14" stroke="#80858f" stroke-width="1.5" fill="#80858f"/><rect x="7" y="7" width="8" height="8" stroke="#80858f" stroke-width="1.3" fill="none"/><path d="M9 1 V5 M7 3 H11" stroke="#80858f" stroke-width="1.3" fill="none"/></svg>
<svg class="a" style="left:1575px;top:94px;" width="16" height="16" viewBox="0 0 16 16"><rect x="2" y="2" width="9" height="9" stroke="#80858f" stroke-width="1.2" fill="none" stroke-dasharray="2 1"/><path d="M6 5 L14 12 L10 12 L12 16 L10.5 16 L8.5 12.5 L6 15 Z" fill="#80858f"/></svg>
<svg class="a" style="left:1575px;top:116px;" width="16" height="16" viewBox="0 0 16 16"><rect x="2" y="1" width="12" height="15" stroke="#80858f" stroke-width="1.3" fill="none"/><rect x="4" y="3" width="8" height="3" fill="#80858f"/><path d="M4 8 H6 M7 8 H9 M10 8 H12 M4 11 H6 M7 11 H9 M10 11 H12 M4 14 H6 M7 14 H9 M10 14 H12" stroke="#80858f" stroke-width="1.5"/></svg>
<svg class="a" style="left:1630px;top:70px;" width="28" height="31" viewBox="0 0 28 31"><rect x="2" y="4" width="16" height="22" fill="#80858f"/><rect x="7" y="1" width="6" height="5" fill="#80858f"/><path d="M9 9 H20 L25 14 V30 H9 Z" fill="#9a9fa9" stroke="#3a4051" stroke-width="1"/></svg>
<div class="t" style="left:1622.0px;top:105.0px;font-size:12px;color:#80858f;transform:scaleX(0.929);transform-origin:0 0;">Einfügen</div>
<svg class="a" style="left:1640.5px;top:119.25px;" width="7.0" height="3.5" viewBox="0 0 7.0 3.5"><path d="M0 0 H7.0 L3.5 3.5 Z" fill="#80858f"/></svg>
<svg class="a" style="left:1680px;top:72px;" width="16" height="16" viewBox="0 0 16 16"><rect x="1" y="1" width="10" height="12" stroke="#80858f" stroke-width="1.3" fill="none"/><circle cx="10" cy="13" r="2" stroke="#80858f" stroke-width="1.3" fill="none"/><circle cx="14" cy="13" r="2" stroke="#80858f" stroke-width="1.3" fill="none"/><path d="M8 3 L14 11 M14 3 L8 11" stroke="#80858f" stroke-width="1.3" fill="none"/></svg>
<svg class="a" style="left:1680px;top:94px;" width="16" height="16" viewBox="0 0 16 16"><rect x="1" y="1" width="9" height="11" fill="#80858f"/><rect x="5" y="5" width="9" height="11" fill="#9a9fa9" stroke="#3a4051"/></svg>
<svg class="a" style="left:1714px;top:74px;" width="33" height="22" viewBox="0 0 33 22"><path d="M1 1 H17 V10 H32 V21 H1 Z" fill="#80858f"/></svg>
<div class="t" style="left:1719.0px;top:105.0px;font-size:12px;color:#80858f;transform:scaleX(0.841);transform-origin:0 0;">Base</div>
<svg class="a" style="left:1727.5px;top:119.25px;" width="7.0" height="3.5" viewBox="0 0 7.0 3.5"><path d="M0 0 H7.0 L3.5 3.5 Z" fill="#80858f"/></svg>
<div class="a" style="left:0px;top:180px;width:1778px;height:3px;background:#3a4050;"></div>
<svg class="a" style="left:0px;top:156px;" width="290" height="27" viewBox="0 0 290 27">
      <path d="M0 4 H6 Q12 4 14 10 L18 22 Q19 25 22 25 H0 Z" fill="#232834"/>
      <path d="M14 25 Q18 25 19 21 L23 8 Q25 3 31 3 H120 Q127 3 129 9 L133 21 Q134 25 139 25 Z" fill="#2f3542"/>
      <path d="M131 25 Q135 25 136 21 L140 8 Q142 3 148 3 H234 Q241 3 243 9 L247 21 Q248 25 253 25 Z" fill="#3a4050"/>
      <path d="M252 25 Q255 25 256 21 L257 12 Q258 6 263 6 H270 Q274 6 275 12 L276 21 Q276 25 279 25 Z" fill="#2c323e"/>
    </svg>
<div class="t" style="left:30.0px;top:164.0px;font-size:12px;color:#dcdcdc;transform:scaleX(0.868);transform-origin:0 0;">Start</div>
<div class="t" style="left:144.0px;top:163.8px;font-size:12.5px;color:#ffffff;font-weight:bold;transform:scaleX(0.978);transform-origin:0 0;">2.3</div>
<svg class="a" style="left:227px;top:165px;" width="10" height="10" viewBox="0 0 10 10"><path d="M1 1 L9 9 M9 1 L1 9" stroke="#d0d3da" stroke-width="1.6"/></svg>
<svg class="a" style="left:260px;top:165px;" width="10" height="10" viewBox="0 0 10 10"><path d="M5 0.5 V9.5 M0.5 5 H9.5" stroke="#c8ccd3" stroke-width="1.5"/></svg>
<div class="t" style="left:3.0px;top:190.0px;font-size:12px;color:#dedede;transform:scaleX(0.956);transform-origin:0 0;">[−][Oben][2D-Drahtkörper]</div>
<svg class="a" style="left:0px;top:0px;" width="1555" height="912" viewBox="0 0 1555 912"><path d="M373 243 V873 M373 873 H1269" stroke="#eeeeee" stroke-width="2"/><path d="M373 243 H408" stroke="#eeeeee" stroke-width="2"/><path d="M373 257 H408" stroke="#eeeeee" stroke-width="2"/><path d="M373 453 H408" stroke="#eeeeee" stroke-width="2"/><path d="M373 467 H408" stroke="#eeeeee" stroke-width="2"/><path d="M373 663 H408" stroke="#eeeeee" stroke-width="2"/><path d="M373 677 H408" stroke="#eeeeee" stroke-width="2"/><path d="M395 439 H408 M395 649 H408" stroke="#eeeeee" stroke-width="2"/><path d="M395 257 V453" stroke="#eeeeee" stroke-width="2"/><path d="M395 467 V663" stroke="#eeeeee" stroke-width="2"/><path d="M395 677 V873" stroke="#eeeeee" stroke-width="2"/><path d="M1248 843 V873 M1269 843 V873" stroke="#eeeeee" stroke-width="2"/><path d="M608 843 V869 H622" stroke="#4cbc58" stroke-width="1.5" fill="none"/><path d="M636 853 H676" stroke="#4cbc58" stroke-width="1.5" fill="none"/><path d="M622 843 V850 M622 862 V869 M618.5 850 H625.5 L618.5 862 H625.5 Z M636 843 V851" stroke="#eeeeee" stroke-width="1.2" fill="none"/><circle cx="608" cy="869" r="1.8" fill="none" stroke="#eeeeee" stroke-width="1.2"/><circle cx="622" cy="869" r="1.8" fill="none" stroke="#eeeeee" stroke-width="1.2"/><circle cx="636" cy="853" r="1.8" fill="none" stroke="#eeeeee" stroke-width="1.2"/><path d="M677 843 V855 Q681 860 689 862 Q697 860 701 855 V843 M683 873 L688.5 864 L694 873 M686 871 H691" stroke="#eeeeee" stroke-width="1.4" fill="none"/><path d="M702 864 L704 866" stroke="#eeeeee" stroke-width="1.5"/></svg>
<div class="t" style="left:339.0px;top:348px;width:90px;height:14px;font-size:13px;color:#f2f2f2;text-align:center;transform:rotate(-90deg);letter-spacing:0.6px;-webkit-text-stroke:0">Obergeschoss</div>
<div class="t" style="left:344.0px;top:558px;width:80px;height:14px;font-size:13px;color:#f2f2f2;text-align:center;transform:rotate(-90deg);letter-spacing:0.6px;-webkit-text-stroke:0">Erdgeschoss</div>
<div class="t" style="left:335.0px;top:769px;width:98px;height:14px;font-size:13px;color:#f2f2f2;text-align:center;transform:rotate(-90deg);letter-spacing:0.6px;-webkit-text-stroke:0">Kellergeschoss</div>
<svg class="a" style="left:8px;top:825px;" width="80" height="75" viewBox="0 0 80 75"><path d="M10 8 V67 H55" stroke="#e8e8e8" stroke-width="1.5" fill="none"/><rect x="6" y="63" width="8" height="8" fill="none" stroke="#e8e8e8" stroke-width="1.3"/><path d="M12 5 L17 10 L22 5 M17 10 V16" stroke="#e8e8e8" stroke-width="1.2" fill="none"/><path d="M60 55 L72 66 M72 55 L60 66" stroke="#e8e8e8" stroke-width="1.3"/></svg>
<svg class="a" style="left:1420px;top:200px;" width="120" height="120" viewBox="0 0 120 120"><circle cx="59" cy="59" r="49" stroke="#4b4f5b" stroke-width="12" fill="none"/></svg>
<div class="a" style="left:1455px;top:236px;width:48px;height:47px;background:#c4c4c9;"></div>
<div class="t" style="left:1463.5px;top:252.5px;font-size:13px;color:#3b3e48;font-weight:bold;transform:scaleX(0.825);transform-origin:0 0;">OBEN</div>
<div class="t" style="left:1472.5px;top:199.0px;font-size:18px;color:#c9cad2;font-weight:bold;transform:scaleX(1.000);transform-origin:0 0;">N</div>
<div class="t" style="left:1418.5px;top:250.0px;font-size:18px;color:#c9cad2;font-weight:bold;transform:scaleX(1.000);transform-origin:0 0;">W</div>
<div class="t" style="left:1524.0px;top:250.0px;font-size:18px;color:#c9cad2;font-weight:bold;transform:scaleX(1.000);transform-origin:0 0;">O</div>
<div class="t" style="left:1473.0px;top:303.0px;font-size:18px;color:#c9cad2;font-weight:bold;transform:scaleX(1.000);transform-origin:0 0;">S</div>
<div class="a" style="left:1457px;top:340px;width:43px;height:16px;background:#a9aab2;border-radius:4px"></div>
<div class="t" style="left:1463.0px;top:342.5px;font-size:11px;color:#55575f;transform:scaleX(0.798);transform-origin:0 0;">WKS</div>
<svg class="a" style="left:1486px;top:346px;" width="8" height="4" viewBox="0 0 8 4"><path d="M0 0 H7 L3.5 3.5 Z" fill="#d8d8dd"/></svg>
<div class="a" style="left:1522px;top:379px;width:30px;height:197px;background:#bdbdc3;border:1px solid #8e9097;border-radius:4px"></div>
<svg class="a" style="left:1522px;top:379px;" width="30" height="197" viewBox="0 0 30 197">
      <circle cx="25" cy="5" r="3" fill="#8a8b92"/><path d="M23.5 3.5 L26.5 6.5 M26.5 3.5 L23.5 6.5" stroke="#ddd" stroke-width="0.8"/>
      <path d="M15 17 A10 10 0 1 0 25 27 V17 Z" fill="none" stroke="#2f3036" stroke-width="1.3"/><circle cx="15" cy="27" r="5.5" fill="none" stroke="#2f3036" stroke-width="1.3"/>
      <path d="M12 46 H18 L15 49 Z" fill="#2f3036"/><path d="M3 53 H27" stroke="#9a9ba2"/>
      <path d="M8 70 L5 66 Q4 63 7 64 L10 68 V57 Q10 55 11.5 55 Q13 55 13 57 V65 M13 65 V54 Q13 52 14.5 52 Q16 52 16 54 V65 M16 65 V55 Q16 53 17.5 53 Q19 53 19 55 V66 M19 66 V58 Q19 56 20.5 56 Q22 56 22 58 V69 Q22 77 15 77 Q11 77 8 70" fill="none" stroke="#2f3036" stroke-width="1.1"/>
      <path d="M5 82 L16 93 M17 82 L5 94 M5 82 V86 M5 82 H9 M17 82 H13 M17 82 V86 M5 94 V90 M5 94 H9" stroke="#2f3036" stroke-width="1.2" fill="none"/><circle cx="19" cy="96" r="4" fill="none" stroke="#2f3036" stroke-width="1.3"/><path d="M22 99 L26 103" stroke="#2f3036" stroke-width="2"/>
      <path d="M12 110 H18 L15 113 Z" fill="#2f3036"/>
      <path d="M12 140 V122 L15 118 L18 122 V140 Z" fill="none" stroke="#2f3036" stroke-width="1.2"/><ellipse cx="15" cy="131" rx="10" ry="4" fill="none" stroke="#2f3036" stroke-width="1.2"/>
      <path d="M12 152 H18 L15 155 Z" fill="#2f3036"/><path d="M3 159 H27" stroke="#9a9ba2"/>
      <rect x="5" y="162" width="5" height="5" fill="none" stroke="#2f3036"/><rect x="12" y="162" width="5" height="5" fill="none" stroke="#2f3036"/><rect x="19" y="162" width="5" height="5" fill="none" stroke="#2f3036"/>
      <rect x="5" y="170" width="14" height="11" fill="none" stroke="#2f3036" stroke-width="1.2"/><path d="M9 172 L15 175.5 L9 179 Z" fill="#2f3036"/>
      <circle cx="25" cy="191" r="3" fill="#8a8b92"/>
    </svg>
<div class="a" style="left:1555px;top:183px;width:2px;height:765px;background:#1d212b;"></div>
<div class="a" style="left:1557px;top:183px;width:221px;height:765px;background:#4e556b;"></div>
<div class="a" style="left:1557px;top:185px;width:221px;height:59px;background:#272c38;"></div>
<svg class="a" style="left:1566px;top:192px;" width="12" height="14" viewBox="0 0 12 14"><path d="M1 4 L6 1 L11 3 V13 L8 12 V5 L6 4.5 V13 L1 11 Z" fill="#e0e0e0"/></svg>
<div class="t" style="left:1583.0px;top:192.8px;font-size:12.5px;color:#f2f2f2;transform:scaleX(0.855);transform-origin:0 0;">Trinkwasser, 2D - Schemaplanung</div>
<div class="a" style="left:1600px;top:213px;width:45px;height:31px;background:#4e556b;"></div>
<div class="a" style="left:1600px;top:213px;width:45px;height:2px;background:#6bb56e;"></div>
<svg class="a" style="left:1566px;top:218px;" width="26" height="24" viewBox="0 0 26 24"><path d="M2 4 H23 M2 11 H23 M2 18 H23" stroke="#f4f4f4" stroke-width="2.6"/></svg>
<svg class="a" style="left:1608px;top:216px;" width="28" height="26" viewBox="0 0 28 26"><rect x="2" y="5" width="20" height="20" fill="none" stroke="#f4f4f4" stroke-width="1.5"/><path d="M6 20 L8 15 L19 4 L22 7 L11 18 Z" fill="none" stroke="#f4f4f4" stroke-width="1.5"/><path d="M17 6 L20 9" stroke="#f4f4f4" stroke-width="1.5"/></svg>
<svg class="a" style="left:1654px;top:217px;" width="24" height="26" viewBox="0 0 24 26"><rect x="2" y="1" width="18" height="23" fill="none" stroke="#f4f4f4" stroke-width="1.6"/><rect x="5" y="4" width="12" height="4" fill="none" stroke="#f4f4f4" stroke-width="1.2"/><path d="M5 12 H8 M10 12 H13 M15 12 H18 M5 16 H8 M10 16 H13 M15 16 H18 M5 20 H8 M10 20 H13 M15 20 H18" stroke="#f4f4f4" stroke-width="2.2"/></svg>
<svg class="a" style="left:1698px;top:217px;" width="24" height="26" viewBox="0 0 24 26"><path d="M2 1 H13 L21 9 V24 H2 Z" fill="none" stroke="#f4f4f4" stroke-width="1.6"/><path d="M13 1 V9 H21" fill="#ccc"/></svg>
<svg class="a" style="left:1742px;top:217px;" width="26" height="26" viewBox="0 0 26 26"><path d="M1 8 V1 H8 M18 1 H25 V8 M25 18 V25 H18 M8 25 H1 V18" fill="none" stroke="#f4f4f4" stroke-width="1.6"/><circle cx="8" cy="13" r="2" fill="#f4f4f4"/><circle cx="13" cy="13" r="2" fill="#f4f4f4"/><circle cx="18" cy="13" r="2" fill="#f4f4f4"/></svg>
<div class="t" style="left:1567.0px;top:250.0px;font-size:12px;color:#f0f0f0;transform:scaleX(0.883);transform-origin:0 0;">Geschosse und Generatoren</div>
<div class="a" style="left:1567px;top:266px;width:28px;height:2px;background:#6bb56e;"></div>
<div class="a" style="left:1567px;top:268px;width:28px;height:25px;background:#3d4356;"></div>
<svg class="a" style="left:1572px;top:271px;" width="18" height="18" viewBox="0 0 18 18"><path d="M1 6 L8 1 L15 6 V16 H1 Z" fill="#e8f0f8" stroke="#fff"/><rect x="3" y="7" width="10" height="2" fill="#4aa3d8"/><rect x="3" y="10" width="10" height="2" fill="#4aa3d8"/><rect x="3" y="13" width="10" height="2" fill="#4aa3d8"/></svg>
<svg class="a" style="left:1600px;top:272px;" width="18" height="16" viewBox="0 0 18 16"><path d="M1 8 H17 M3 4 V12 M15 4 V12 M4 3 L14 13 M14 3 L4 13" stroke="#eee" stroke-width="1.2"/></svg>
<svg class="a" style="left:1628px;top:271px;" width="18" height="18" viewBox="0 0 18 18"><rect x="9" y="1" width="5" height="10" fill="#eee"/><rect x="1" y="9" width="11" height="5" fill="#eee"/><circle cx="12" cy="13" r="4" fill="none" stroke="#9bc"/></svg>
<div class="a" style="left:1567px;top:292px;width:200px;height:651px;background:#343b4b;"></div>
<svg class="a" style="left:1573px;top:297px;" width="17" height="17" viewBox="0 0 17 17"><path d="M1 6 L8 1 L15 6 V16 H1 Z" fill="none" stroke="#fff" stroke-width="1.3"/><rect x="3" y="7" width="10" height="2" fill="#5ab0e0"/><rect x="3" y="10" width="10" height="2" fill="#5ab0e0"/><rect x="3" y="13" width="10" height="2" fill="#5ab0e0"/></svg>
<div class="t" style="left:1592.0px;top:300.0px;font-size:12px;color:#f0f0f0;transform:scaleX(0.818);transform-origin:0 0;">Geschosse ...</div>
<svg class="a" style="left:1573px;top:319px;" width="17" height="17" viewBox="0 0 17 17"><path d="M1 6 L8 1 L15 6 V16 H1 Z" fill="none" stroke="#fff" stroke-width="1.3"/><path d="M3 8 H9 M3 11 H8 M3 14 H8" stroke="#fff"/><circle cx="12" cy="12" r="3" fill="#7ab" stroke="#fff"/></svg>
<div class="t" style="left:1592.0px;top:322.0px;font-size:12px;color:#f0f0f0;transform:scaleX(0.864);transform-origin:0 0;">Geschossschnitt &lt;</div>
<svg class="a" style="left:1750px;top:325px;" width="10" height="6" viewBox="0 0 10 6"><path d="M0 5 H9 L4.5 0 Z" fill="#f0f0f0"/></svg>
<div class="a" style="left:1573px;top:340px;width:186px;height:151px;background:#2a2f3d;"></div>
<div class="a" style="left:1573px;top:340px;width:186px;height:17px;background:#262a37;"></div>
<svg class="a" style="left:1573px;top:340px;" width="186" height="151" viewBox="0 0 186 151"><path d="M0 17 H186" stroke="#4a5062" stroke-width="1"/><path d="M0 34 H186" stroke="#4a5062" stroke-width="1"/><path d="M0 51 H186" stroke="#4a5062" stroke-width="1"/><path d="M0 68 H186" stroke="#4a5062" stroke-width="1"/><path d="M0 84.5 H186" stroke="#4a5062" stroke-width="1"/><path d="M0 101.5 H186" stroke="#4a5062" stroke-width="1"/><path d="M0 118 H186" stroke="#4a5062" stroke-width="1"/><path d="M0 134.60000000000002 H186" stroke="#4a5062" stroke-width="1"/><path d="M37 0 V151" stroke="#4a5062" stroke-width="1"/></svg>
<div class="t" style="left:1585.0px;top:343.0px;font-size:12px;color:#e8e8e8;transform:scaleX(1.026);transform-origin:0 0;">j/n</div>
<div class="t" style="left:1613.0px;top:343.0px;font-size:12px;color:#e8e8e8;transform:scaleX(0.821);transform-origin:0 0;">Bezeichnung</div>
<svg class="a" style="left:1587px;top:361px;" width="10" height="9" viewBox="0 0 10 9"><path d="M1 4 L4 7 L9 1" stroke="#f0f0f0" stroke-width="1.5" fill="none"/></svg>
<div class="t" style="left:1612.0px;top:360.0px;font-size:12px;color:#f0f0f0;transform:scaleX(0.799);transform-origin:0 0;">Kellergeschoss</div>
<svg class="a" style="left:1587px;top:378px;" width="10" height="9" viewBox="0 0 10 9"><path d="M1 4 L4 7 L9 1" stroke="#f0f0f0" stroke-width="1.5" fill="none"/></svg>
<div class="t" style="left:1612.0px;top:377.0px;font-size:12px;color:#f0f0f0;transform:scaleX(0.807);transform-origin:0 0;">Erdgeschoss</div>
<svg class="a" style="left:1587px;top:395px;" width="10" height="9" viewBox="0 0 10 9"><path d="M1 4 L4 7 L9 1" stroke="#f0f0f0" stroke-width="1.5" fill="none"/></svg>
<div class="t" style="left:1612.0px;top:394.0px;font-size:12px;color:#f0f0f0;transform:scaleX(0.814);transform-origin:0 0;">Obergeschoss</div>
<div class="t" style="left:1577.0px;top:501.0px;font-size:12px;color:#e8e8e8;transform:scaleX(0.809);transform-origin:0 0;">Länge</div>
<div class="a" style="left:1617px;top:499px;width:43px;height:19px;background:#333948;border:1px solid #4a5062"></div>
<div class="t" style="left:1651.0px;top:502.5px;font-size:11px;color:#70768a;transform:scaleX(1.000);transform-origin:0 0;">0</div>
<div class="a" style="left:1666px;top:502px;width:12px;height:12px;background:#2a2f3d;border:1.5px solid #f0f0f0"></div>
<svg class="a" style="left:1667px;top:503px;" width="10" height="10" viewBox="0 0 10 10"><path d="M2 5 L4.5 8 L9 2" stroke="#fff" stroke-width="1.5" fill="none"/></svg>
<div class="t" style="left:1682.0px;top:501.0px;font-size:12px;color:#f0f0f0;transform:scaleX(0.792);transform-origin:0 0;">zeigen</div>
<div class="a" style="left:1571px;top:526px;width:180px;height:19px;background:#2e3342;"></div>
<svg class="a" style="left:1573px;top:527px;" width="16" height="17" viewBox="0 0 16 17"><rect x="1" y="1" width="14" height="15" fill="#1b3a5a" stroke="#fff" stroke-width="1.3"/><path d="M5 4 V13 M10 4 V13 M3 7 H13 M3 10 H13" stroke="#6af" stroke-width="1"/><path d="M1 16 L4 11 L3 14 L6 13 L2 17 Z" fill="#f0c040"/></svg>
<div class="t" style="left:1592.0px;top:529.0px;font-size:12px;color:#f0f0f0;transform:scaleX(0.867);transform-origin:0 0;">Schemagenerator, Trinkwasser ...</div>
<div class="a" style="left:1767px;top:244px;width:11px;height:704px;background:#4e556b;"></div>
<div class="a" style="left:0px;top:912px;width:22px;height:36px;background:#2a2f3b;"></div>
<svg class="a" style="left:6px;top:915px;" width="12" height="6" viewBox="0 0 12 6"><rect x="0" y="0.0" width="1.2" height="1.2" fill="#c0c0c0"/><rect x="0" y="2.5" width="1.2" height="1.2" fill="#c0c0c0"/><rect x="2" y="0.0" width="1.2" height="1.2" fill="#c0c0c0"/><rect x="2" y="2.5" width="1.2" height="1.2" fill="#c0c0c0"/><rect x="4" y="0.0" width="1.2" height="1.2" fill="#c0c0c0"/><rect x="4" y="2.5" width="1.2" height="1.2" fill="#c0c0c0"/><rect x="6" y="0.0" width="1.2" height="1.2" fill="#c0c0c0"/><rect x="6" y="2.5" width="1.2" height="1.2" fill="#c0c0c0"/><rect x="8" y="0.0" width="1.2" height="1.2" fill="#c0c0c0"/><rect x="8" y="2.5" width="1.2" height="1.2" fill="#c0c0c0"/><rect x="10" y="0.0" width="1.2" height="1.2" fill="#c0c0c0"/><rect x="10" y="2.5" width="1.2" height="1.2" fill="#c0c0c0"/></svg>
<svg class="a" style="left:6px;top:925px;" width="10" height="10" viewBox="0 0 10 10"><path d="M1 1 L9 9 M9 1 L1 9" stroke="#f0f0f0" stroke-width="1.8"/></svg>
<div class="t" style="left:25px;top:924px;font-family:'Liberation Mono',monospace;font-size:12px;color:#151515;transform:scaleX(0.9);transform-origin:0 0">Befehl: SchemeGenerator</div>
<div class="t" style="left:25px;top:937.5px;font-family:'Liberation Mono',monospace;font-size:12px;color:#151515;transform:scaleX(0.9);transform-origin:0 0">Befehl: SchemeGenerator</div>
<div class="a" style="left:0px;top:947px;width:1778px;height:53px;background:#ffffff;"></div>
<svg class="a" style="left:4px;top:952px;" width="44" height="44" viewBox="0 0 44 44"><circle cx="22" cy="22" r="21" fill="#1e3b47"/><path d="M15 11 L33 22 L15 33 Z" fill="#fff"/></svg>
<div class="t" style="left:66.0px;top:968.5px;font-size:11px;color:#222;transform:scaleX(0.856);transform-origin:0 0;">01:04 / 03:50</div>
<div class="a" style="left:143px;top:972px;width:1362px;height:4px;background:#dcdcdc;border-radius:2px"></div>
<div class="a" style="left:143px;top:972px;width:379px;height:4px;background:#1e3b47;border-radius:2px"></div>
<svg class="a" style="left:514px;top:966px;" width="16" height="16" viewBox="0 0 16 16"><circle cx="8" cy="8" r="6.5" fill="#1e3b47"/></svg>
<svg class="a" style="left:1605px;top:963px;" width="22" height="22" viewBox="0 0 22 22"><circle cx="11" cy="11" r="3.5" fill="none" stroke="#222" stroke-width="1.5"/><path d="M11 2 L13 4.5 L16 3.5 L16.5 6.5 L19.5 8 L18 11 L19.5 14 L16.5 15.5 L16 18.5 L13 17.5 L11 20 L9 17.5 L6 18.5 L5.5 15.5 L2.5 14 L4 11 L2.5 8 L5.5 6.5 L6 3.5 L9 4.5 Z" fill="none" stroke="#222" stroke-width="1.4"/></svg>
<svg class="a" style="left:1648px;top:964px;" width="28" height="20" viewBox="0 0 28 20"><path d="M1 3 L9 10 L1 17 Z" fill="none" stroke="#999" stroke-width="1.3"/><path d="M8 3 L16 10 L8 17 Z" fill="none" stroke="#222" stroke-width="1.5"/><path d="M15 3 L26 10 L15 17 Z" fill="none" stroke="#222" stroke-width="1.6"/></svg>
<svg class="a" style="left:1696px;top:963px;" width="26" height="22" viewBox="0 0 26 22"><path d="M2 8 H7 L14 2 V20 L7 14 H2 Z" fill="none" stroke="#222" stroke-width="1.6"/><path d="M17 7 Q20 11 17 15 M19 4 Q25 11 19 18" fill="none" stroke="#222" stroke-width="1.5"/></svg>
<svg class="a" style="left:1744px;top:963px;" width="22" height="22" viewBox="0 0 22 22"><path d="M3 19 L9 13 M4 13 H9 V18 M19 3 L13 9 M18 9 H13 V4" fill="none" stroke="#222" stroke-width="1.6"/></svg>
<div class="a" style="left:407px;top:151px;width:963px;height:692px;background:#f5f1f4;border-radius:7px;box-shadow:0 0 8px rgba(0,0,0,0.45)"></div>
<svg class="a" style="left:415px;top:157px;" width="16" height="15" viewBox="0 0 16 15"><rect x="0" y="0" width="16" height="15" fill="#1d4a4e"/><path d="M4 13 V6 Q4 3 8 3 Q12 3 12 6 V13 H10 V7 Q10 5 8 5 Q6 5 6 7 V13 Z" fill="#e8f4f4"/><path d="M8 6 V13" stroke="#1d4a4e" stroke-width="1.3"/></svg>
<div class="t" style="left:435.0px;top:157.8px;font-size:12.5px;color:#6e6a70;transform:scaleX(0.859);transform-origin:0 0;">Schemagenerator, Trinkwasser</div>
<div class="t" style="left:1303.7px;top:158.0px;font-size:12px;color:#777;transform:scaleX(1.000);transform-origin:0 0;">?</div>
<svg class="a" style="left:1343px;top:158px;" width="12" height="12" viewBox="0 0 12 12"><path d="M1 1 L11 11 M11 1 L1 11" stroke="#666" stroke-width="1.1"/></svg>
<div class="a" style="left:416px;top:186px;width:183px;height:578px;background:#f4f0f3;border:1px solid #3d3d3d"></div>
<div class="a" style="left:419px;top:192px;width:177px;height:20px;background:#fbfafb;border:1px solid #d8d4d8;border-bottom:1px solid #bdb9bd;border-radius:2px"></div>
<div class="t" style="left:422.0px;top:196.5px;font-size:11px;color:#111;transform:scaleX(0.860);transform-origin:0 0;">Symbole EN 806</div>
<svg class="a" style="left:582px;top:198px;" width="10" height="7" viewBox="0 0 10 7"><path d="M1 1 L5 5 L9 1" stroke="#333" stroke-width="1.1" fill="none"/></svg>
<svg class="a" style="left:416px;top:186px;" width="183" height="578" viewBox="0 0 183 578"><rect x="3.5" y="31.5" width="32" height="35" rx="3" fill="#f8f6f8" stroke="#d6d1d6"/><path d="M3 61.5 H36" stroke="#5e1220" stroke-width="1.4"/><g transform="translate(3,31)"><path d="M9.0 18 H23.0 L17.5 25 H14.5 Z M16 25 V27.5" stroke="#111" stroke-width="1.5" fill="none"/></g><rect x="39.5" y="31.5" width="32" height="35" rx="3" fill="#f8f6f8" stroke="#d6d1d6"/><path d="M39 61.5 H72" stroke="#5e1220" stroke-width="1.4"/><g transform="translate(39,31)"><path d="M9.0 18 H23.0 L17.5 25 H14.5 Z M16 25 V27.5" stroke="#111" stroke-width="1.5" fill="none"/><path d="M13 15 H15 M17 15 H19" stroke="#111" stroke-width="1.5"/></g><rect x="75.5" y="31.5" width="32" height="35" rx="3" fill="#f8f6f8" stroke="#d6d1d6"/><path d="M75 61.5 H108" stroke="#5e1220" stroke-width="1.4"/><g transform="translate(75,31)"><rect x="11" y="2.5" width="11" height="8" stroke="#111" stroke-width="1.5" fill="none"/><path d="M9.0 18 H23.0 L17.5 25 H14.5 Z M16 25 V27.5" stroke="#111" stroke-width="1.5" fill="none"/></g><rect x="111.5" y="31.5" width="32" height="35" rx="3" fill="#f8f6f8" stroke="#d6d1d6"/><path d="M111 61.5 H144" stroke="#5e1220" stroke-width="1.4"/><g transform="translate(111,31)"><rect x="11" y="2.5" width="11" height="8" stroke="#111" stroke-width="1.5" fill="none"/><path d="M10 14 H22" stroke="#111" stroke-width="1.8"/><path d="M9.0 18 H23.0 L17.5 25 H14.5 Z M16 25 V27.5" stroke="#111" stroke-width="1.5" fill="none"/></g><rect x="147.5" y="31.5" width="32" height="35" rx="3" fill="#f8f6f8" stroke="#d6d1d6"/><path d="M147 61.5 H180" stroke="#5e1220" stroke-width="1.4"/><g transform="translate(147,31)"><path d="M11.5 19 H20.5 L17.5 25 H14.5 Z M16 25 V27.5" stroke="#111" stroke-width="1.5" fill="none"/></g><rect x="3.5" y="70.5" width="32" height="35" rx="3" fill="#f8f6f8" stroke="#d6d1d6"/><path d="M3 100.5 H36" stroke="#3d1218" stroke-width="1.4"/><g transform="translate(3,70)"><rect x="12" y="3.5" width="10" height="8" stroke="#111" stroke-width="1.5" fill="none"/><path d="M11.5 19 H21.5 L18.0 25 H15.0 Z M16.5 25 V27.5" stroke="#111" stroke-width="1.5" fill="none"/></g><rect x="39.5" y="70.5" width="32" height="35" rx="3" fill="#f8f6f8" stroke="#d6d1d6"/><path d="M39 100.5 H72" stroke="#3d1218" stroke-width="1.4"/><g transform="translate(39,70)"><rect x="12" y="3.5" width="10" height="8" stroke="#111" stroke-width="1.5" fill="none"/><path d="M11 15 H22" stroke="#111" stroke-width="1.8"/><path d="M11.5 19 H21.5 L18.0 25 H15.0 Z M16.5 25 V27.5" stroke="#111" stroke-width="1.5" fill="none"/></g><rect x="75.5" y="70.5" width="32" height="35" rx="3" fill="#f8f6f8" stroke="#d6d1d6"/><path d="M75 100.5 H108" stroke="#3d1218" stroke-width="1.4"/><g transform="translate(75,70)"><path d="M11.0 18.5 H21.0 L17.5 24.5 H14.5 Z M16 24.5 V27.0" stroke="#111" stroke-width="1.5" fill="none"/><rect x="18" y="25" width="4" height="4" fill="#111"/></g><rect x="111.5" y="70.5" width="32" height="35" rx="3" fill="#f8f6f8" stroke="#d6d1d6"/><path d="M111 100.5 H144" stroke="#3d1218" stroke-width="1.4"/><g transform="translate(111,70)"><path d="M4 18 H29 Q27 24 23 25 Q19 24 17 20 Q14 25 10 25 Q6 24 4 18 Z M10 25 V27 M23 25 V27" stroke="#111" stroke-width="1.5" fill="none"/></g><rect x="147.5" y="70.5" width="32" height="35" rx="3" fill="#f8f6f8" stroke="#d6d1d6"/><path d="M147 100.5 H180" stroke="#3d1218" stroke-width="1.4"/><g transform="translate(147,70)"><rect x="12" y="11" width="11" height="5" stroke="#111" stroke-width="1.5" fill="none"/><path d="M17.5 16 V21" stroke="#111" stroke-width="1.5" fill="none"/></g><rect x="3.5" y="110.5" width="32" height="35" rx="3" fill="#f8f6f8" stroke="#d6d1d6"/><path d="M3 140.5 H36" stroke="#1a1a1a" stroke-width="1.4"/><g transform="translate(3,110)"><rect x="14" y="7" width="4" height="4" fill="#111"/><rect x="11" y="18" width="10" height="5" stroke="#111" stroke-width="1.5" fill="none"/><path d="M16 23 V26" stroke="#111" stroke-width="1.5" fill="none"/></g><rect x="39.5" y="110.5" width="32" height="35" rx="3" fill="#f8f6f8" stroke="#d6d1d6"/><path d="M39 140.5 H72" stroke="#1a1a1a" stroke-width="1.4"/><g transform="translate(39,110)"><path d="M4 11 H14" stroke="#111" stroke-width="1.5" fill="none"/><rect x="14" y="11" width="13" height="6" stroke="#111" stroke-width="1.5" fill="none"/><path d="M19 17 V22" stroke="#111" stroke-width="2"/></g><rect x="75.5" y="110.5" width="32" height="35" rx="3" fill="#f8f6f8" stroke="#d6d1d6"/><path d="M75 140.5 H108" stroke="#1a1a1a" stroke-width="1.4"/><g transform="translate(75,110)"><rect x="5" y="11" width="23" height="6" stroke="#111" stroke-width="1.5" fill="none"/><path d="M16.5 10 V21" stroke="#111" stroke-width="1.5" fill="none"/></g><rect x="111.5" y="110.5" width="32" height="35" rx="3" fill="#f8f6f8" stroke="#d6d1d6"/><path d="M111 140.5 H144" stroke="#1a1a1a" stroke-width="1.4"/><g transform="translate(111,110)"><path d="M4 18 H17" stroke="#111" stroke-width="1.5" fill="none"/><rect x="17" y="18" width="10" height="6" stroke="#111" stroke-width="1.5" fill="none"/><rect x="20" y="23" width="5" height="4" fill="#111"/></g><rect x="147.5" y="110.5" width="32" height="35" rx="3" fill="#f8f6f8" stroke="#d6d1d6"/><path d="M147 140.5 H180" stroke="#1a1a1a" stroke-width="1.4"/><g transform="translate(147,110)"><rect x="4" y="18" width="24" height="6" stroke="#111" stroke-width="1.5" fill="none"/><path d="M16 18 V24" stroke="#111" stroke-width="1.5" fill="none"/><rect x="18" y="23" width="4" height="4" fill="#111"/></g><rect x="3.5" y="150.5" width="32" height="35" rx="3" fill="#f8f6f8" stroke="#d6d1d6"/><path d="M3 180.5 H36" stroke="#4a1820" stroke-width="1.4"/><g transform="translate(3,150)"><rect x="3" y="11" width="13" height="20" stroke="#111" stroke-width="1.5" fill="none"/><path d="M3 16 H29 V11 H16" stroke="#111" stroke-width="1.5" fill="none"/><path d="M7 23 H13 M10 23 V28 M8 22 Q10 20 12 22" stroke="#111" stroke-width="1.2" fill="none"/><path d="M20 9 L21 7" stroke="#111" stroke-width="1.2" fill="none"/></g><rect x="39.5" y="150.5" width="32" height="35" rx="3" fill="#f8f6f8" stroke="#d6d1d6"/><path d="M39 180.5 H72" stroke="#4a1820" stroke-width="1.4"/><g transform="translate(39,150)"><rect x="3" y="11" width="13" height="20" stroke="#111" stroke-width="1.5" fill="none"/><path d="M3 16 H29 V11 H16" stroke="#111" stroke-width="1.5" fill="none"/><path d="M7 23 H13 M10 23 V28 M8 22 Q10 20 12 22" stroke="#111" stroke-width="1.2" fill="none"/><path d="M20 9 L21 7" stroke="#111" stroke-width="1.2" fill="none"/><rect x="24" y="17" width="4" height="4" fill="#111"/></g><rect x="75.5" y="150.5" width="32" height="35" rx="3" fill="#f8f6f8" stroke="#d6d1d6"/><path d="M75 180.5 H108" stroke="#4a1820" stroke-width="1.4"/><g transform="translate(75,150)"><rect x="6" y="7" width="21" height="24" rx="2" stroke="#111" stroke-width="1.5" fill="none"/><path d="M9 14 Q16 9 24 14 M16.5 12 V23" stroke="#111" stroke-width="1.2" fill="none"/><path d="M28 6 L30 5" stroke="#111" stroke-width="1.2" fill="none"/></g><rect x="111.5" y="150.5" width="32" height="35" rx="3" fill="#f8f6f8" stroke="#d6d1d6"/><path d="M111 180.5 H144" stroke="#4a1820" stroke-width="1.4"/><g transform="translate(111,150)"><rect x="6" y="7" width="21" height="24" rx="2" stroke="#111" stroke-width="1.5" fill="none"/><circle cx="16.5" cy="19" r="8" stroke="#111" stroke-width="1" fill="none"/><path d="M28 6 L30 5" stroke="#111" stroke-width="1.2" fill="none"/></g><rect x="3.5" y="190.5" width="32" height="35" rx="3" fill="#f8f6f8" stroke="#d6d1d6"/><path d="M3 220.5 H36" stroke="#5e1a26" stroke-width="1.4"/><g transform="translate(3,190)"><rect x="12" y="9" width="8" height="9" stroke="#111" stroke-width="1.5" fill="none"/><path d="M11.0 20 H21.0 L16 29 Z" stroke="#111" stroke-width="1.5" fill="none"/></g><rect x="39.5" y="190.5" width="32" height="35" rx="3" fill="#f8f6f8" stroke="#d6d1d6"/><path d="M39 220.5 H72" stroke="#5e1a26" stroke-width="1.4"/><g transform="translate(39,190)"><rect x="11" y="5" width="10" height="10" stroke="#111" stroke-width="1.5" fill="none"/><path d="M13 7 L15 9 L17 7" stroke="#111" stroke-width="1.2" fill="none"/><path d="M10.0 17 H22.0 L16 28 Z" stroke="#111" stroke-width="1.5" fill="none"/><path d="M26 3 V8" stroke="#111" stroke-width="1.5" fill="none"/></g><rect x="75.5" y="190.5" width="32" height="35" rx="3" fill="#f8f6f8" stroke="#d6d1d6"/><path d="M75 220.5 H108" stroke="#5e1a26" stroke-width="1.4"/><g transform="translate(75,190)"><rect x="12" y="9" width="8" height="9" stroke="#111" stroke-width="1.3" stroke-dasharray="2 2" fill="none"/><path d="M11.5 19 H20.5 L16 28 Z" stroke="#111" stroke-width="1.5" fill="none"/></g><rect x="111.5" y="190.5" width="32" height="35" rx="3" fill="#f8f6f8" stroke="#d6d1d6"/><path d="M111 220.5 H144" stroke="#5e1a26" stroke-width="1.4"/><g transform="translate(111,190)"><path d="M12.0 20 H20.0 L16 28 Z" stroke="#111" stroke-width="1.5" fill="none"/></g><rect x="147.5" y="190.5" width="32" height="35" rx="3" fill="#f8f6f8" stroke="#d6d1d6"/><path d="M147 220.5 H180" stroke="#5e1a26" stroke-width="1.4"/><g transform="translate(147,190)"><path d="M12.0 20 H20.0 L16 26 Z" stroke="#111" stroke-width="1.5" fill="none"/></g><rect x="3.5" y="230.5" width="32" height="35" rx="3" fill="#f8f6f8" stroke="#d6d1d6"/><path d="M3 260.5 H36" stroke="#5e1a26" stroke-width="1.4"/><g transform="translate(3,230)"><rect x="12" y="13" width="8" height="4" stroke="#111" stroke-width="1.5" fill="none"/><path d="M12.0 17 H20.0 L16 24 Z" stroke="#111" stroke-width="1.5" fill="none"/></g><rect x="39.5" y="230.5" width="32" height="35" rx="3" fill="#f8f6f8" stroke="#d6d1d6"/><path d="M39 260.5 H72" stroke="#5e1a26" stroke-width="1.4"/><g transform="translate(39,230)"><rect x="12" y="11" width="8" height="6" stroke="#111" stroke-width="1.5" fill="none"/><rect x="15" y="13" width="2" height="2" fill="#111"/><path d="M12.0 17 H20.0 L16 24 Z" stroke="#111" stroke-width="1.5" fill="none"/></g><rect x="3.5" y="269.5" width="32" height="35" rx="3" fill="#f8f6f8" stroke="#d6d1d6"/><path d="M3 299.5 H36" stroke="#7d1424" stroke-width="1.4"/><g transform="translate(3,269)"><path d="M3 20 H28 V28 H10 Z" stroke="#111" stroke-width="1.5" fill="none"/></g><rect x="39.5" y="269.5" width="32" height="35" rx="3" fill="#f8f6f8" stroke="#d6d1d6"/><path d="M39 299.5 H72" stroke="#7d1424" stroke-width="1.4"/><g transform="translate(39,269)"><rect x="8" y="23" width="18" height="5" stroke="#111" stroke-width="1.5" fill="none"/></g><rect x="75.5" y="269.5" width="32" height="35" rx="3" fill="#f8f6f8" stroke="#d6d1d6"/><g transform="translate(75,269)"><circle cx="6" cy="8" r="2.5" stroke="#111" stroke-width="1.2" fill="none"/><circle cx="27" cy="8" r="2.5" stroke="#111" stroke-width="1.2" fill="none"/><path d="M6 11 V12 H27 V11 M16.5 12 V34" stroke="#111" stroke-width="1.2" fill="none"/><rect x="14.5" y="24" width="4" height="7" rx="2" stroke="#111" stroke-width="1.2" fill="none"/></g><rect x="111.5" y="269.5" width="32" height="35" rx="3" fill="#f8f6f8" stroke="#d6d1d6"/><g transform="translate(111,269)"><path d="M16 2 V12 M13 9 L16 12 L19 9 M16 13 Q19 15 16 17 Q13 19 16 21 M16 22 L15 25" stroke="#111" stroke-width="1.2" fill="none"/></g><rect x="147.5" y="269.5" width="32" height="35" rx="3" fill="#f8f6f8" stroke="#d6d1d6"/><g transform="translate(147,269)"><path d="M17 4 V32" stroke="#111" stroke-width="1.2" fill="none"/><rect x="15.5" y="15" width="3" height="6" stroke="#111" stroke-width="1.2" fill="none"/></g><rect x="3.5" y="309.5" width="32" height="35" rx="3" fill="#f8f6f8" stroke="#d6d1d6"/><path d="M3 339.5 H36" stroke="#1a1214" stroke-width="1.4"/><g transform="translate(3,309)"><rect x="5" y="3" width="23" height="23" stroke="#111" stroke-width="1.5" fill="none"/><path d="M9 26 V6 H17 V10 H23 V26 M12 6 V26" stroke="#111" stroke-width="1.2" fill="none"/><rect x="12" y="8" width="7" height="5" stroke="#111" stroke-width="1.2" fill="none"/></g><rect x="39.5" y="309.5" width="32" height="35" rx="3" fill="#f8f6f8" stroke="#d6d1d6"/><path d="M39 339.5 H72" stroke="#1a1214" stroke-width="1.4"/><g transform="translate(39,309)"><rect x="5" y="3" width="23" height="23" stroke="#111" stroke-width="1.5" fill="none"/><path d="M9 26 V6 H17 V10 H23 V26 M12 6 V26" stroke="#111" stroke-width="1.2" fill="none"/><rect x="12" y="8" width="7" height="5" stroke="#111" stroke-width="1.2" fill="none"/><path d="M14 18 V24" stroke="#111" stroke-width="1.2" fill="none"/></g><rect x="75.5" y="309.5" width="32" height="35" rx="3" fill="#f8f6f8" stroke="#d6d1d6"/><g transform="translate(75,309)"><path d="M10 9 Q10 3 16 3 Q22 3 22 9 V26 Q22 31 16 31 Q10 31 10 26 Z M22 8 H27 M22 16 H27 M5 25 H10 M14 34 L16 30 L18 34" stroke="#111" stroke-width="1.2" fill="none"/></g><rect x="111.5" y="309.5" width="32" height="35" rx="3" fill="#f8f6f8" stroke="#d6d1d6"/><g transform="translate(111,309)"><path d="M10 8 Q10 3 16 3 Q22 3 22 8 V26 Q22 31 16 31 Q10 31 10 26 Z M5 10 H27 M22 16 H27 M5 16 H10 M5 24 H10 M11 12 H20 L13 19 H19" stroke="#111" stroke-width="1.2" fill="none"/></g><rect x="147.5" y="309.5" width="32" height="35" rx="3" fill="#f8f6f8" stroke="#d6d1d6"/><g transform="translate(147,309)"><rect x="3" y="3" width="30" height="23" stroke="#111" stroke-width="1.5" fill="none"/><path d="M7 26 V6 H13 V10 H19 V26 M22 26 V10 H30" stroke="#111" stroke-width="1.2" fill="none"/><rect x="9" y="8" width="7" height="5" stroke="#111" stroke-width="1.2" fill="none"/></g><rect x="3.5" y="349.5" width="32" height="35" rx="3" fill="#f8f6f8" stroke="#d6d1d6"/><g transform="translate(3,349)"><rect x="6" y="5" width="20" height="24" stroke="#111" stroke-width="1.5" fill="none"/><rect x="11" y="15" width="9" height="6" fill="#111" opacity="0.85"/><path d="M16 21 V30" stroke="#111" stroke-width="1.2" fill="none"/></g><rect x="39.5" y="349.5" width="32" height="35" rx="3" fill="#f8f6f8" stroke="#d6d1d6"/><path d="M39 379.5 H72" stroke="#8a1a2a" stroke-width="1.4"/><g transform="translate(39,349)"><rect x="14" y="4" width="8" height="16" stroke="#111" stroke-width="1.5" fill="none"/><path d="M18 6 V13 L16 15" stroke="#111" stroke-width="1.2" fill="none"/><rect x="17" y="15" width="4" height="3" fill="#111"/></g><rect x="75.5" y="349.5" width="32" height="35" rx="3" fill="#f8f6f8" stroke="#d6d1d6"/><path d="M75 379.5 H108" stroke="#8a1a2a" stroke-width="1.4"/><g transform="translate(75,349)"><rect x="12" y="8" width="9" height="12" stroke="#111" stroke-width="1.5" fill="none"/><path d="M15 11 H18 V15 M15 13 V15" stroke="#111" stroke-width="1.2" fill="none"/></g><rect x="111.5" y="349.5" width="32" height="35" rx="3" fill="#f8f6f8" stroke="#d6d1d6"/><path d="M111 379.5 H144" stroke="#8a1a2a" stroke-width="1.4"/><g transform="translate(111,349)"><path d="M15 19 H20 V24 H17 M15 19 V26" stroke="#111" stroke-width="1.5" fill="none"/></g><rect x="3.5" y="389.5" width="32" height="35" rx="3" fill="#f8f6f8" stroke="#d6d1d6"/><g transform="translate(3,389)"><path d="M3 4 H24 V11 M3 4 V11 H24" stroke="#111" stroke-width="1.5" fill="none"/><rect x="6" y="7" width="6" height="8" rx="1" stroke="#111" stroke-width="1.5" fill="none"/><rect x="14" y="7" width="6" height="8" rx="1" stroke="#111" stroke-width="1.5" fill="none"/><path d="M9 15 V28 H31 M18 15 V24 H31" stroke="#111" stroke-width="1.3" fill="none"/><path d="M9 28 H31" stroke="#7c1d2c" stroke-width="1.3"/></g><rect x="39.5" y="389.5" width="32" height="35" rx="3" fill="#f8f6f8" stroke="#d6d1d6"/><g transform="translate(39,389)"><path d="M3 4 H24 V11 M3 4 V11 H24" stroke="#111" stroke-width="1.5" fill="none"/><rect x="6" y="7" width="6" height="8" rx="1" stroke="#111" stroke-width="1.5" fill="none"/><rect x="14" y="7" width="6" height="8" rx="1" stroke="#111" stroke-width="1.5" fill="none"/><path d="M9 15 V28 H24 V14 M18 15 V24 H21 V14" stroke="#111" stroke-width="1.3" fill="none"/></g><rect x="75.5" y="389.5" width="32" height="35" rx="3" fill="#f8f6f8" stroke="#d6d1d6"/><g transform="translate(75,389)"><rect x="11" y="17" width="6" height="5" stroke="#111" stroke-width="1.2" fill="none"/><rect x="16" y="18" width="5" height="3" stroke="#111" stroke-width="1.2" fill="none"/></g><rect x="111.5" y="389.5" width="32" height="35" rx="3" fill="#f8f6f8" stroke="#d6d1d6"/><g transform="translate(111,389)"><rect x="16" y="14" width="6" height="6" stroke="#111" stroke-width="1.2" fill="none"/><rect x="21" y="15" width="5" height="4" stroke="#111" stroke-width="1.2" fill="none"/><path d="M8 24 H14 M11 21 V24" stroke="#111" stroke-width="1.2" fill="none"/></g><rect x="3.5" y="429.5" width="32" height="35" rx="3" fill="#f8f6f8" stroke="#d6d1d6"/><g transform="translate(3,429)"><path d="M3 30 H30 M9 30 V23 H28" stroke="#7c1d2c" stroke-width="1.5" fill="none"/></g><rect x="39.5" y="429.5" width="32" height="35" rx="3" fill="#f8f6f8" stroke="#d6d1d6"/><g transform="translate(39,429)"><path d="M3 30 H30 M3 23 H30 M16 23 V30" stroke="#7c1d2c" stroke-width="1.5" fill="none"/></g><rect x="75.5" y="429.5" width="32" height="35" rx="3" fill="#f8f6f8" stroke="#d6d1d6"/><g transform="translate(75,429)"><path d="M3 30 H30 M3 23 H22 V30" stroke="#7c1d2c" stroke-width="1.5" fill="none"/></g><rect x="111.5" y="429.5" width="32" height="35" rx="3" fill="#f8f6f8" stroke="#d6d1d6"/><g transform="translate(111,429)"><path d="M3 30 H30 M17 18 V30" stroke="#7c1d2c" stroke-width="1.5" fill="none"/></g><rect x="147.5" y="429.5" width="32" height="35" rx="3" fill="#f8f6f8" stroke="#d6d1d6"/><g transform="translate(147,429)"><path d="M3 17 H30 M16 17 V30" stroke="#7c1d2c" stroke-width="1.5" fill="none"/></g><rect x="3.5" y="468.5" width="32" height="35" rx="3" fill="#f8f6f8" stroke="#d6d1d6"/><g transform="translate(3,468)"><circle cx="10" cy="19.5" r="5" stroke="#111" stroke-width="2" fill="none"/><path d="M15 19.5 H30 M21 16.5 L17 19.5 L21 22.5" stroke="#111" stroke-width="1.2" fill="none"/></g><rect x="39.5" y="468.5" width="32" height="35" rx="3" fill="#f8f6f8" stroke="#d6d1d6"/><g transform="translate(39,468)"><rect x="5.5" y="4" width="21" height="26" stroke="#111" stroke-width="1.5" fill="none"/><path d="M5.5 10.5 H26.5" stroke="#111" stroke-width="1.2" fill="none"/><text x="11" y="25" font-size="9" font-family="Liberation Sans" fill="#111">m³</text></g><rect x="75.5" y="468.5" width="32" height="35" rx="3" fill="#f8f6f8" stroke="#d6d1d6"/><g transform="translate(75,468)"><rect x="5.5" y="3.5" width="21.5" height="28" stroke="#111" stroke-width="1.5" fill="none"/><rect x="8.5" y="13.5" width="16" height="15" stroke="#111" stroke-width="1.5" fill="none"/><path d="M13 4 H19 L13 12 H19 Z" stroke="#111" stroke-width="1.2" fill="none"/><rect x="12" y="16.5" width="8" height="3" stroke="#7c1d2c" stroke-width="1.2" fill="none"/><text x="10" y="27" font-size="7.5" font-weight="bold" font-family="Liberation Sans" fill="#7c1d2c">Σm³</text></g><rect x="111.5" y="468.5" width="70" height="35" rx="3" fill="#f8f6f8" stroke="#d6d1d6"/><g transform="translate(111,468)"><path d="M3 4 H66" stroke="#111" stroke-width="2"/><path d="M6 4 V7" stroke="#111" stroke-width="1.2" fill="none"/><path d="M4 8 H8 L4 14 H8 Z" stroke="#111" stroke-width="1.2" fill="none"/><path d="M10 16 L13 14" stroke="#111" stroke-width="1.2" fill="none"/><rect x="5.5" y="17.5" width="13" height="14" stroke="#111" stroke-width="1.5" fill="none"/><path d="M8 20.5 H16" stroke="#111" stroke-width="1.2" fill="none"/><text x="7" y="29" font-size="7" font-weight="bold" font-family="Liberation Sans" fill="#7c1d2c">Σm</text><path d="M27 4 V7" stroke="#111" stroke-width="1.2" fill="none"/><path d="M25 8 H29 L25 14 H29 Z" stroke="#111" stroke-width="1.2" fill="none"/><path d="M31 16 L34 14" stroke="#111" stroke-width="1.2" fill="none"/><rect x="26.5" y="17.5" width="13" height="14" stroke="#111" stroke-width="1.5" fill="none"/><path d="M29 20.5 H37" stroke="#111" stroke-width="1.2" fill="none"/><text x="28" y="29" font-size="7" font-weight="bold" font-family="Liberation Sans" fill="#7c1d2c">Σm</text><path d="M46 4 V7" stroke="#111" stroke-width="1.2" fill="none"/><path d="M44 8 H48 L44 14 H48 Z" stroke="#111" stroke-width="1.2" fill="none"/><path d="M50 16 L53 14" stroke="#111" stroke-width="1.2" fill="none"/><rect x="45.5" y="17.5" width="13" height="14" stroke="#111" stroke-width="1.5" fill="none"/><path d="M48 20.5 H56" stroke="#111" stroke-width="1.2" fill="none"/><text x="47" y="29" font-size="7" font-weight="bold" font-family="Liberation Sans" fill="#7c1d2c">Σm</text></g><rect x="3.5" y="508.5" width="32" height="35" rx="3" fill="#f8f6f8" stroke="#d6d1d6"/><g transform="translate(3,508)"><path d="M7 15 L16.5 21.5 L7 28 Z M26 15 L16.5 21.5 L26 28 Z" stroke="#111" stroke-width="1.5" fill="none"/><path d="M26 15 V28" stroke="#111" stroke-width="1.8"/><path d="M19.5 32 V27 H22 M22 32 V29 M23.5 27 H27 V29" stroke="#111" stroke-width="1.2" fill="none"/></g><rect x="39.5" y="508.5" width="32" height="35" rx="3" fill="#f8f6f8" stroke="#d6d1d6"/><g transform="translate(39,508)"><path d="M10 5.5 H19 M14.5 5.5 V16" stroke="#111" stroke-width="1.5" fill="none"/><path d="M14.5 16 L18 20 L14.5 24 L11 20 Z" stroke="#111" stroke-width="1.2" fill="none"/><path d="M4 19 L14.5 26 L4 33 Z M26 19 L14.5 26 L26 33 Z" stroke="#111" stroke-width="1.5" fill="none"/></g><rect x="75.5" y="508.5" width="32" height="35" rx="3" fill="#f8f6f8" stroke="#d6d1d6"/><g transform="translate(75,508)"><path d="M9.5 7 V12 M9.5 23 V27" stroke="#111" stroke-width="1.2" fill="none"/><path d="M7.0 12 H12.0 L9.5 17.5 Z M7.0 23 H12.0 L9.5 17.5 Z" stroke="#111" stroke-width="1.2" fill="none"/><path d="M16 7 V12 M16 23 V27" stroke="#111" stroke-width="1.2" fill="none"/><path d="M13.5 12 H18.5 L16 17.5 Z M13.5 23 H18.5 L16 17.5 Z" stroke="#111" stroke-width="1.2" fill="none"/><path d="M22.5 7 V12 M22.5 23 V27" stroke="#111" stroke-width="1.2" fill="none"/><path d="M20.0 12 H25.0 L22.5 17.5 Z M20.0 23 H25.0 L22.5 17.5 Z" stroke="#111" stroke-width="1.2" fill="none"/><path d="M4 27.5 H27" stroke="#111" stroke-width="1.5" fill="none"/></g><rect x="111.5" y="508.5" width="32" height="35" rx="3" fill="#f8f6f8" stroke="#d6d1d6"/><g transform="translate(111,508)"><path d="M2 17.5 H10 M15 17.5 H18 M25 17.5 H30" stroke="#111" stroke-width="1.2" fill="none"/><path d="M7 15.5 L10 17.5 L7 19.5" stroke="#111" stroke-width="1.2" fill="none"/><rect x="10" y="12" width="5" height="10" rx="1" stroke="#111" stroke-width="1.5" fill="none"/><rect x="18" y="14" width="7" height="7" rx="1" stroke="#111" stroke-width="1.5" fill="none"/><rect x="20.5" y="16.5" width="2" height="2" fill="#111"/></g></svg>
<div class="a" style="left:605px;top:186px;width:636px;height:578px;background:#f4f0f3;border:1px solid #7d7a7d"></div>
<svg class="a" style="left:605px;top:186px;" width="636" height="578" viewBox="0 0 636 578"><defs><linearGradient id="kgg" x1="0" y1="0" x2="0" y2="1"><stop offset="0" stop-color="#cdcacd"/><stop offset="1" stop-color="#e9e6e9"/></linearGradient><linearGradient id="shd" x1="0" y1="0" x2="0" y2="1"><stop offset="0" stop-color="#000" stop-opacity="0.10"/><stop offset="1" stop-color="#000" stop-opacity="0"/></linearGradient></defs><rect x="0" y="503" width="590" height="75" fill="url(#shd)"/><rect x="3.0" y="508" width="33" height="32" rx="3" fill="url(#kgg)" stroke="#aeaaae"/><rect x="39.1" y="508" width="33" height="32" rx="3" fill="url(#kgg)" stroke="#aeaaae"/><rect x="75.2" y="508" width="33" height="32" rx="3" fill="url(#kgg)" stroke="#aeaaae"/><rect x="111.3" y="508" width="33" height="32" rx="3" fill="url(#kgg)" stroke="#aeaaae"/><rect x="147.4" y="508" width="33" height="32" rx="3" fill="url(#kgg)" stroke="#aeaaae"/><rect x="183.5" y="508" width="33" height="32" rx="3" fill="url(#kgg)" stroke="#aeaaae"/><rect x="219.6" y="508" width="33" height="32" rx="3" fill="url(#kgg)" stroke="#aeaaae"/><rect x="255.7" y="508" width="33" height="32" rx="3" fill="url(#kgg)" stroke="#aeaaae"/><rect x="291.8" y="508" width="33" height="32" rx="3" fill="url(#kgg)" stroke="#aeaaae"/><rect x="327.9" y="508" width="33" height="32" rx="3" fill="url(#kgg)" stroke="#aeaaae"/><rect x="364.0" y="508" width="33" height="32" rx="3" fill="url(#kgg)" stroke="#aeaaae"/><rect x="400.1" y="508" width="33" height="32" rx="3" fill="url(#kgg)" stroke="#aeaaae"/><rect x="436.2" y="508" width="33" height="32" rx="3" fill="url(#kgg)" stroke="#aeaaae"/><rect x="472.3" y="508" width="33" height="32" rx="3" fill="url(#kgg)" stroke="#aeaaae"/><rect x="508.4" y="508" width="33" height="32" rx="3" fill="url(#kgg)" stroke="#aeaaae"/><rect x="544.5" y="508" width="33" height="32" rx="3" fill="url(#kgg)" stroke="#aeaaae"/><rect x="580.6" y="508" width="33" height="32" rx="3" fill="url(#kgg)" stroke="#aeaaae"/><rect x="581" y="367" width="33" height="32" rx="3" fill="#f5f3f5" stroke="#cfcacf"/><rect x="581" y="437" width="33" height="32" rx="3" fill="#f5f3f5" stroke="#cfcacf"/><rect x="581" y="296" width="33" height="34" rx="3" fill="#cbc8cb" stroke="#c4c0c4"/><path d="M304 500 V559" stroke="#b03a4a" stroke-width="1.5"/><path d="M307.5 500 V559" stroke="#111" stroke-width="1.5"/><path d="M311 500 V559" stroke="#3fb84f" stroke-width="1.5"/><path d="M200 540 V558 H312 M272 534 V558" stroke="#4cb85a" stroke-width="1.2" fill="none"/><g transform="translate(183,508)"><path d="M2 16 H9 M14 16 H17 M24 16 H31" stroke="#111" stroke-width="1.2" fill="none"/><rect x="9" y="11.5" width="5" height="9" rx="1" stroke="#111" stroke-width="1.8" fill="none"/><rect x="17.5" y="12.5" width="6.5" height="7" rx="1" stroke="#111" stroke-width="1.8" fill="none"/></g><g transform="translate(255,508)"><path d="M11 8 Q11 2 16.5 2 Q22 2 22 8 V23 Q22 28 16.5 28 Q11 28 11 23 Z M22 7 H27 M22 14 H27 M6 22 H11 M14 32 L16.5 28 L19 32" stroke="#111" stroke-width="1.2" fill="none"/></g></svg>
<div class="t" style="left:1222.0px;top:564.0px;font-size:10px;color:#222;transform:scaleX(1.000);transform-origin:0 0;">OG</div>
<div class="t" style="left:1222.0px;top:634.0px;font-size:10px;color:#222;transform:scaleX(1.000);transform-origin:0 0;">EG</div>
<div class="t" style="left:1222.0px;top:704.0px;font-size:10px;color:#222;transform:scaleX(1.000);transform-origin:0 0;">KG</div>
<svg class="a" style="left:1248px;top:190px;" width="12" height="8" viewBox="0 0 12 8"><path d="M1 6 H10 L5.5 1 Z" fill="#9b989b"/></svg>
<svg class="a" style="left:1248px;top:752px;" width="12" height="8" viewBox="0 0 12 8"><path d="M1 1 H10 L5.5 6 Z" fill="#9b989b"/></svg>
<svg class="a" style="left:607px;top:771px;" width="10" height="10" viewBox="0 0 10 10"><path d="M8 1 V9 L2 5 Z" fill="#a9a6a9"/></svg>
<svg class="a" style="left:1228px;top:771px;" width="10" height="10" viewBox="0 0 10 10"><path d="M2 1 V9 L8 5 Z" fill="#a9a6a9"/></svg>
<div class="a" style="left:791px;top:788px;width:243px;height:18px;background:#ffffff;border-bottom:2px solid #a9a6a9"></div>
<div class="t" style="left:891.5px;top:791.2px;font-size:11.5px;color:#111;transform:scaleX(0.879);transform-origin:0 0;">1. Strang</div>
<svg class="a" style="left:1036px;top:789px;" width="60" height="16" viewBox="0 0 60 16"><path d="M2 2 V14 M2 8.5 H56 M56 2 V14" stroke="#3fb84f" stroke-width="1.3"/></svg>
<div class="a" style="left:835px;top:809px;width:20px;height:19px;background:#f6f4f6;border:1px solid #cfcbcf;border-radius:2px"></div>
<div class="t" style="left:841.5px;top:813.0px;font-size:12px;color:#222;transform:scaleX(1.000);transform-origin:0 0;">+</div>
<div class="a" style="left:857px;top:809px;width:55px;height:19px;background:#dce9f6;border:1px solid #93b5d8;border-radius:2px"></div>
<div class="t" style="left:881.2px;top:813.0px;font-size:12px;color:#222;transform:scaleX(1.000);transform-origin:0 0;">1</div>
<div class="a" style="left:915px;top:809px;width:55px;height:19px;background:#fbfafb;border:1px solid #cfcbcf;border-radius:2px"></div>
<div class="t" style="left:939.2px;top:813.0px;font-size:12px;color:#222;transform:scaleX(1.000);transform-origin:0 0;">2</div>
<div class="a" style="left:973px;top:809px;width:20px;height:19px;background:#f6f4f6;border:1px solid #cfcbcf;border-radius:2px"></div>
<div class="t" style="left:979.5px;top:813.0px;font-size:12px;color:#222;transform:scaleX(1.000);transform-origin:0 0;">+</div>
<div class="a" style="left:1285px;top:537px;width:25px;height:22px;background:#d3d1d4;border:1px solid #c0bdc0;border-radius:2px"></div>
<div class="a" style="left:1316px;top:537px;width:25px;height:22px;background:#d3d1d4;border:1px solid #c0bdc0;border-radius:2px"></div>
<svg class="a" style="left:1291px;top:542px;" width="14" height="12" viewBox="0 0 14 12"><path d="M4 4 Q11 2 11 9" stroke="#1a2a3a" stroke-width="1.6" fill="none"/><path d="M1 4 L6 1 L6 7 Z" fill="#1a2a3a"/></svg>
<svg class="a" style="left:1322px;top:542px;" width="14" height="12" viewBox="0 0 14 12"><path d="M10 4 Q3 2 3 9" stroke="#1a2a3a" stroke-width="1.6" fill="none"/><path d="M13 4 L8 1 L8 7 Z" fill="#1a2a3a"/></svg>
<div class="a" style="left:1269px;top:603px;width:92px;height:19px;background:#fdfcfd;border:1px solid #d3cfd3;border-bottom-color:#bcb8bc;border-radius:3px"></div>
<div class="t" style="left:1305.5px;top:606.8px;font-size:11.5px;color:#111;transform:scaleX(0.901);transform-origin:0 0;">Neu</div>
<div class="a" style="left:1269px;top:625px;width:92px;height:20px;background:#fdfcfd;border:1px solid #d3cfd3;border-bottom-color:#bcb8bc;border-radius:3px"></div>
<div class="t" style="left:1296.5px;top:629.2px;font-size:11.5px;color:#111;transform:scaleX(0.890);transform-origin:0 0;">Laden...</div>
<div class="a" style="left:1269px;top:647px;width:92px;height:20px;background:#fdfcfd;border:1px solid #d3cfd3;border-bottom-color:#bcb8bc;border-radius:3px"></div>
<div class="t" style="left:1288.0px;top:651.2px;font-size:11.5px;color:#111;transform:scaleX(0.880);transform-origin:0 0;">Speichern...</div>
<div class="a" style="left:1269px;top:671px;width:92px;height:20px;background:#fdfcfd;border:1px solid #d3cfd3;border-bottom-color:#bcb8bc;border-radius:3px"></div>
<div class="t" style="left:1290.0px;top:675.2px;font-size:11.5px;color:#111;transform:scaleX(0.889);transform-origin:0 0;">Optionen...</div>
<div class="a" style="left:1269px;top:693px;width:92px;height:19px;background:#fdfcfd;border:1px solid #d3cfd3;border-bottom-color:#bcb8bc;border-radius:3px"></div>
<div class="t" style="left:1283.5px;top:696.8px;font-size:11.5px;color:#111;transform:scaleX(0.840);transform-origin:0 0;">Import aus AW</div>
<div class="a" style="left:1269px;top:716px;width:92px;height:19px;background:#fdfcfd;border:1px solid #d3cfd3;border-bottom-color:#bcb8bc;border-radius:3px"></div>
<div class="t" style="left:1287.5px;top:719.8px;font-size:11.5px;color:#111;transform:scaleX(0.820);transform-origin:0 0;">Geschosse...</div>
<div class="a" style="left:1269px;top:746px;width:92px;height:19px;background:#fdfcfd;border:1px solid #d3cfd3;border-bottom-color:#bcb8bc;border-radius:3px"></div>
<div class="t" style="left:1290.5px;top:749.8px;font-size:11.5px;color:#111;transform:scaleX(0.856);transform-origin:0 0;">Zeichnen &lt;</div>
<div class="a" style="left:1269px;top:815px;width:92px;height:19px;background:#fdfcfd;border:1px solid #d3cfd3;border-bottom-color:#bcb8bc;border-radius:3px"></div>
<div class="t" style="left:1295.0px;top:818.8px;font-size:11.5px;color:#111;transform:scaleX(0.869);transform-origin:0 0;">Beenden</div>
<div class="a" style="left:1269px;top:783px;width:11px;height:11px;background:#f6f4f6;border:1px solid #555;border-radius:2px"></div>
<div class="t" style="left:1282.0px;top:777.5px;font-size:11px;color:#111;transform:scaleX(0.903);transform-origin:0 0;">Einfügepunkt</div>
<div class="t" style="left:1282.0px;top:789.5px;font-size:11px;color:#111;transform:scaleX(0.895);transform-origin:0 0;">zeigen</div>
<svg class="a" style="left:1356px;top:829px;" width="14" height="14" viewBox="0 0 14 14"><path d="M13 3 L3 13 M13 8 L8 13" stroke="#8a878a" stroke-width="1.2"/></svg>
<div class="a" style="left:593px;top:304px;width:594px;height:386px;background:#f4f1f4;border:1px solid #b9b6bb;border-radius:8px;box-shadow:0 8px 24px rgba(0,0,0,0.30)"></div>
<div class="a" style="left:594px;top:305px;width:592px;height:26px;background:linear-gradient(#eaf1f9,#eef1f8);border-radius:7px 7px 0 0"></div>
<div class="t" style="left:601.0px;top:311.0px;font-size:12px;color:#111;transform:scaleX(0.902);transform-origin:0 0;">Technische Daten</div>
<div class="t" style="left:1119.4px;top:310.5px;font-size:13px;color:#222;transform:scaleX(1.000);transform-origin:0 0;">?</div>
<svg class="a" style="left:1159px;top:311px;" width="12" height="12" viewBox="0 0 12 12"><path d="M1 1 L11 11 M11 1 L1 11" stroke="#222" stroke-width="1.2"/></svg>
<div class="a" style="left:603px;top:361px;width:573px;height:292px;background:#f4f1f4;border:1px solid #e4e0e4;box-shadow:inset 0 0 0 1px #ffffff"></div>
<div class="a" style="left:606px;top:343px;width:158px;height:19px;background:#f4f1f4;border:1px solid #e8e4e8;border-bottom:none"></div>
<div class="t" style="left:609.0px;top:345.2px;font-size:11.5px;color:#111;transform:scaleX(0.854);transform-origin:0 0;">Einstellung dieser Entnahmestelle</div>
<div class="a" style="left:764px;top:346px;width:84px;height:15px;background:#efecef;border:1px solid #e4e0e4;border-bottom:none"></div>
<div class="t" style="left:768.0px;top:347.2px;font-size:11.5px;color:#111;transform:scaleX(0.848);transform-origin:0 0;">Spüleinstellungen</div>
<div class="t" style="left:624.0px;top:377.5px;font-size:11px;color:#111;transform:scaleX(0.880);transform-origin:0 0;">Bezeichnung</div>
<div class="a" style="left:692px;top:374px;width:446px;height:20px;background:#ffffff;border-bottom:2px solid #888488"></div>
<div class="t" style="left:696.0px;top:377.5px;font-size:11px;color:#111;transform:scaleX(0.885);transform-origin:0 0;">Dusche</div>
<div class="a" style="left:1145px;top:374px;width:21px;height:20px;background:#fbfafb;border:1px solid #d5d1d5;border-radius:3px"></div>
<svg class="a" style="left:1147px;top:376px;" width="17" height="16" viewBox="0 0 17 16"><path d="M13 5 A5.5 5.5 0 1 0 13.5 10" stroke="#111" stroke-width="2.2" fill="none"/><path d="M9 2 H15 V8 Z" fill="#111"/></svg>
<div class="t" style="left:624.0px;top:405.5px;font-size:11px;color:#111;transform:scaleX(0.908);transform-origin:0 0;">Spülfunktion</div>
<div class="a" style="left:625px;top:424px;width:192px;height:19px;background:#fdfcfd;border:1px solid #cfcbcf;border-bottom:1px solid #8f8b8f;border-radius:2px"></div>
<div class="t" style="left:628.0px;top:427.8px;font-size:11.5px;color:#111;transform:scaleX(0.874);transform-origin:0 0;">manuell, nicht spülrelevant</div>
<svg class="a" style="left:803px;top:430.5px;" width="10" height="6" viewBox="0 0 10 6"><path d="M1 1 L5 5 L9 1" stroke="#333" stroke-width="1.1" fill="none"/></svg>
<svg class="a" style="left:801px;top:362px;" width="16" height="22" viewBox="0 0 16 22"><path d="M2 1 V17 L6 13 L9 20 L12 19 L9 12 H14 Z" fill="#fff" stroke="#111" stroke-width="1.2"/></svg>
<div class="t" style="left:624.0px;top:449.5px;font-size:11px;color:#111;transform:scaleX(0.898);transform-origin:0 0;">Spitzendurchfluss</div>
<div class="a" style="left:625px;top:468px;width:192px;height:19px;background:#fdfcfd;border:1px solid #cfcbcf;border-bottom:1px solid #8f8b8f;border-radius:2px"></div>
<div class="t" style="left:628.0px;top:471.8px;font-size:11.5px;color:#111;transform:scaleX(0.887);transform-origin:0 0;">automatisch</div>
<svg class="a" style="left:803px;top:474.5px;" width="10" height="6" viewBox="0 0 10 6"><path d="M1 1 L5 5 L9 1" stroke="#333" stroke-width="1.1" fill="none"/></svg>
<svg class="a" style="left:801px;top:362px;" width="16" height="22" viewBox="0 0 16 22"><path d="M2 1 V17 L6 13 L9 20 L12 19 L9 12 H14 Z" fill="#fff" stroke="#111" stroke-width="1.2"/></svg>
<div class="a" style="left:903px;top:410px;width:266px;height:208px;background:transparent;border:1px solid #e0dce0"></div>
<div class="a" style="left:906px;top:404px;width:145px;height:14px;background:#f4f1f4;"></div>
<div class="t" style="left:910.0px;top:405.5px;font-size:11px;color:#111;transform:scaleX(0.918);transform-origin:0 0;">Armatur aus VDI 3805 Blatt 17</div>
<div class="a" style="left:910px;top:428px;width:103px;height:19px;background:#fdfcfd;border:1px solid #cfcbcf;border-bottom-color:#a9a5a9;border-radius:3px"></div>
<div class="t" style="left:921.0px;top:432.5px;font-size:11px;color:#111;transform:scaleX(0.940);transform-origin:0 0;">Armatur wählen...</div>
<div class="a" style="left:1030px;top:428px;width:102px;height:19px;background:#f6f4f6;border:1px solid #ebe7eb;border-radius:3px"></div>
<div class="t" style="left:1051.5px;top:432.5px;font-size:11px;color:#9d9a9d;transform:scaleX(0.894);transform-origin:0 0;">Zurücksetzen</div>
<div class="t" style="left:673.0px;top:511.5px;font-size:11px;color:#111;transform:scaleX(0.893);transform-origin:0 0;">Mindestfließdruck</div>
<div class="a" style="left:763px;top:507px;width:53px;height:19px;background:#ffffff;border-bottom:1px solid #8f8b8f;border-radius:2px"></div>
<div class="t" style="left:768.0px;top:510.5px;font-size:11px;color:#111;transform:scaleX(0.892);transform-origin:0 0;">1000.0</div>
<div class="t" style="left:822.0px;top:510.5px;font-size:11px;color:#111;transform:scaleX(0.869);transform-origin:0 0;">hPa</div>
<div class="t" style="left:672.0px;top:533.5px;font-size:11px;color:#111;transform:scaleX(0.886);transform-origin:0 0;">Durchfluss (PWC)</div>
<div class="a" style="left:763px;top:529px;width:54px;height:19px;background:#fdfcfd;border:1px solid #cfcbcf;border-bottom:1px solid #8f8b8f;border-radius:2px"></div>
<div class="t" style="left:767.0px;top:532.8px;font-size:11.5px;color:#111;transform:scaleX(1.072);transform-origin:0 0;">0.15</div>
<svg class="a" style="left:803px;top:535.5px;" width="10" height="6" viewBox="0 0 10 6"><path d="M1 1 L5 5 L9 1" stroke="#333" stroke-width="1.1" fill="none"/></svg>
<svg class="a" style="left:801px;top:362px;" width="16" height="22" viewBox="0 0 16 22"><path d="M2 1 V17 L6 13 L9 20 L12 19 L9 12 H14 Z" fill="#fff" stroke="#111" stroke-width="1.2"/></svg>
<div class="t" style="left:822.0px;top:534.5px;font-size:11px;color:#111;transform:scaleX(1.000);transform-origin:0 0;">l/s</div>
<div class="a" style="left:850px;top:534px;width:11px;height:11px;background:#fbfafb;border:1px solid #555;border-radius:2px"></div>
<div class="t" style="left:865.0px;top:534.5px;font-size:11px;color:#111;transform:scaleX(0.924);transform-origin:0 0;">100%</div>
<div class="t" style="left:672.0px;top:556.5px;font-size:11px;color:#111;transform:scaleX(0.886);transform-origin:0 0;">Durchfluss (PWH)</div>
<div class="a" style="left:763px;top:553px;width:54px;height:19px;background:#fdfcfd;border:1px solid #cfcbcf;border-bottom:1px solid #8f8b8f;border-radius:2px"></div>
<div class="t" style="left:767.0px;top:556.8px;font-size:11.5px;color:#111;transform:scaleX(1.072);transform-origin:0 0;">0.15</div>
<svg class="a" style="left:803px;top:559.5px;" width="10" height="6" viewBox="0 0 10 6"><path d="M1 1 L5 5 L9 1" stroke="#333" stroke-width="1.1" fill="none"/></svg>
<svg class="a" style="left:801px;top:362px;" width="16" height="22" viewBox="0 0 16 22"><path d="M2 1 V17 L6 13 L9 20 L12 19 L9 12 H14 Z" fill="#fff" stroke="#111" stroke-width="1.2"/></svg>
<div class="t" style="left:822.0px;top:557.5px;font-size:11px;color:#111;transform:scaleX(1.000);transform-origin:0 0;">l/s</div>
<div class="a" style="left:850px;top:557px;width:11px;height:11px;background:#fbfafb;border:1px solid #555;border-radius:2px"></div>
<div class="t" style="left:865.0px;top:556.5px;font-size:11px;color:#111;transform:scaleX(0.924);transform-origin:0 0;">100%</div>
<div class="t" style="left:627.0px;top:581.5px;font-size:11px;color:#111;transform:scaleX(0.894);transform-origin:0 0;">Mindestanschlussnennweite</div>
<div class="a" style="left:763px;top:577px;width:54px;height:19px;background:#fdfcfd;border:1px solid #cfcbcf;border-bottom:1px solid #8f8b8f;border-radius:2px"></div>
<div class="a" style="left:767px;top:580px;width:25px;height:13px;background:#0b5fb8;"></div>
<div class="t" style="left:768.0px;top:580.8px;font-size:11.5px;color:#ffffff;transform:scaleX(0.706);transform-origin:0 0;">DN 12</div>
<svg class="a" style="left:803px;top:583.5px;" width="10" height="6" viewBox="0 0 10 6"><path d="M1 1 L5 5 L9 1" stroke="#333" stroke-width="1.1" fill="none"/></svg>
<svg class="a" style="left:801px;top:362px;" width="16" height="22" viewBox="0 0 16 22"><path d="M2 1 V17 L6 13 L9 20 L12 19 L9 12 H14 Z" fill="#fff" stroke="#111" stroke-width="1.2"/></svg>
<div class="a" style="left:763px;top:602px;width:53px;height:17px;background:#fdfcfd;border:1px solid #d5d1d5;border-bottom-color:#aaa6aa;border-radius:3px"></div>
<div class="t" style="left:776.5px;top:604.2px;font-size:11.5px;color:#111;transform:scaleX(0.865);transform-origin:0 0;">Reset</div>
<div class="a" style="left:1034px;top:660px;width:68px;height:20px;background:#fdfdfe;border:1.5px solid #24485a;border-radius:4px"></div>
<div class="t" style="left:1061.0px;top:664.2px;font-size:11.5px;color:#111;transform:scaleX(0.843);transform-origin:0 0;">OK</div>
<div class="a" style="left:1110px;top:661px;width:67px;height:19px;background:#fdfcfd;border:1px solid #d5d1d5;border-bottom-color:#b5b1b5;border-radius:3px"></div>
<div class="t" style="left:1120.0px;top:664.2px;font-size:11.5px;color:#111;transform:scaleX(0.845);transform-origin:0 0;">Abbrechen</div>
<svg class="a" style="left:801px;top:362px;" width="16" height="22" viewBox="0 0 16 22"><path d="M2 1 V17 L6 13 L9 20 L12 19 L9 12 H14 Z" fill="#fff" stroke="#111" stroke-width="1.2"/></svg>
</body></html>
